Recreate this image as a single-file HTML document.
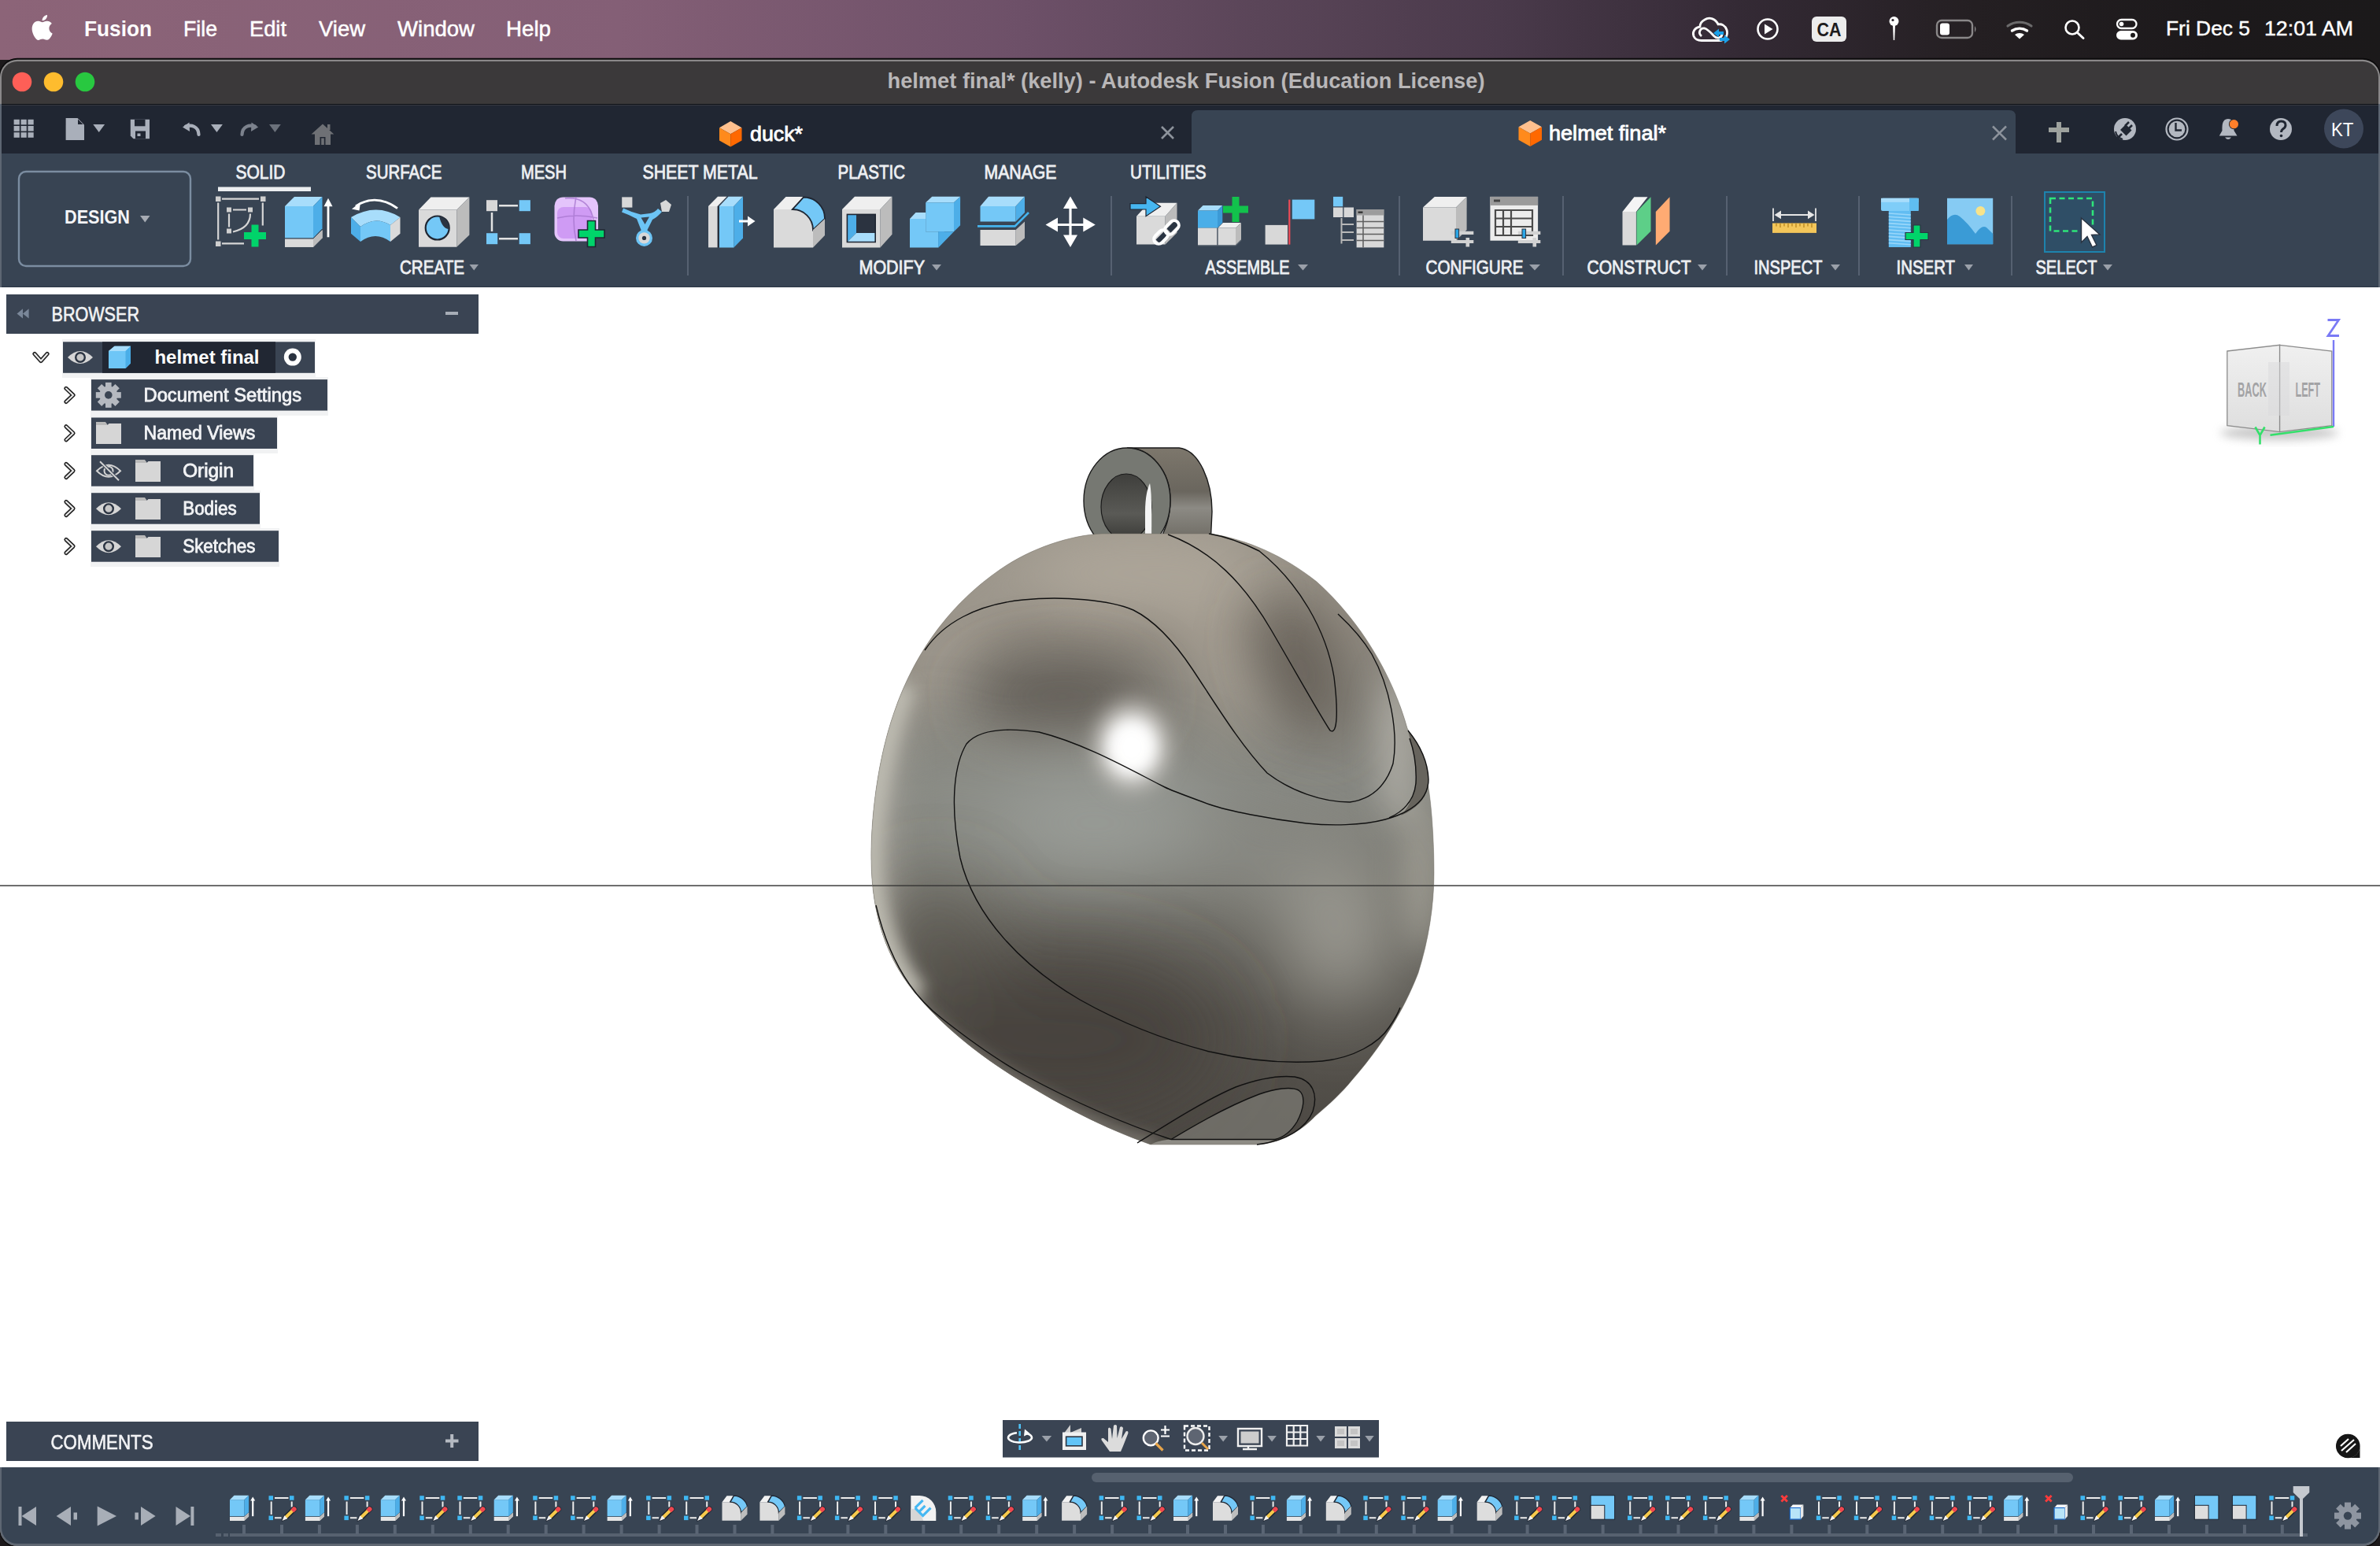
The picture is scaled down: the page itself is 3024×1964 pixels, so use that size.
<!DOCTYPE html>
<html><head><meta charset="utf-8">
<style>
*{margin:0;padding:0}
html,body{width:3024px;height:1964px;overflow:hidden;background:#1c191b}
svg{position:absolute;left:0;top:0;display:block}
text{font-family:"Liberation Sans",sans-serif}
</style></head><body>
<svg width="3024" height="1964" viewBox="0 0 3024 1964">
<defs>
<linearGradient id="gMenu" x1="0" y1="0" x2="1" y2="0">
<stop offset="0" stop-color="#8c6478"/>
<stop offset="0.26" stop-color="#845f76"/>
<stop offset="0.43" stop-color="#6d5068"/>
<stop offset="0.53" stop-color="#5a4558"/>
<stop offset="0.63" stop-color="#4a3a4b"/>
<stop offset="0.73" stop-color="#342a35"/>
<stop offset="0.83" stop-color="#241f22"/>
<stop offset="0.93" stop-color="#1c191b"/>
<stop offset="1" stop-color="#1b191a"/>
</linearGradient>
</defs>

<rect x="0" y="0" width="3024" height="76" fill="url(#gMenu)"/>
<g transform="translate(37.7 19) scale(1.33)" fill="#fff"><path d="M12.152 6.896c-.948 0-2.415-1.078-3.96-1.040-2.040.027-3.910 1.183-4.961 3.014-2.117 3.675-.546 9.103 1.519 12.090 1.013 1.454 2.208 3.090 3.792 3.039 1.520-.065 2.090-.987 3.935-.987 1.831 0 2.350.987 3.960.948 1.637-.026 2.676-1.480 3.676-2.948 1.156-1.688 1.636-3.325 1.662-3.415-.039-.013-3.182-1.221-3.220-4.857-.026-3.040 2.480-4.494 2.597-4.559-1.429-2.090-3.623-2.324-4.390-2.376-2-.156-3.675 1.090-4.610 1.090zM15.530 3.830c.843-1.012 1.400-2.427 1.245-3.830-1.207.052-2.662.805-3.532 1.818-.780.896-1.454 2.338-1.273 3.714 1.338.104 2.715-.688 3.559-1.701"/></g>
<text x="107" y="46" font-size="27" fill="#fff" font-weight="bold" textLength="86" lengthAdjust="spacingAndGlyphs">Fusion</text>
<text x="233" y="46" font-size="27" fill="#fff" textLength="43" lengthAdjust="spacingAndGlyphs" stroke="#fff" stroke-width="0.5">File</text>
<text x="317" y="46" font-size="27" fill="#fff" textLength="47" lengthAdjust="spacingAndGlyphs" stroke="#fff" stroke-width="0.5">Edit</text>
<text x="405" y="46" font-size="27" fill="#fff" textLength="59" lengthAdjust="spacingAndGlyphs" stroke="#fff" stroke-width="0.5">View</text>
<text x="505" y="46" font-size="27" fill="#fff" textLength="98" lengthAdjust="spacingAndGlyphs" stroke="#fff" stroke-width="0.5">Window</text>
<text x="643" y="46" font-size="27" fill="#fff" textLength="57" lengthAdjust="spacingAndGlyphs" stroke="#fff" stroke-width="0.5">Help</text>
<g fill="none" stroke="#fff" stroke-width="2.8" stroke-linejoin="round"><path d="M2162 51.5 H2184 C2192 51.5 2196 45 2194 38 C2192 32 2187 30 2183 31 C2180 24 2172 21 2166 25 C2162 27 2160 31 2160 34 C2153 35 2150 41 2152 46 C2153.5 49.5 2157 51.5 2162 51.5Z"/><path d="M2162 46 C2157 42 2160 35 2166 36 C2170 37 2174 42 2178 46 C2182 50 2188 48 2188 43"/></g>
<path d="M2177 42 l7 -5.5 v3.5 h6 v4 h-6 v3.5z M2198 50 l-7 5.5 v-3.5 h-6 v-4 h6 v-3.5z" fill="#1aa0e8"/>
<circle cx="2246" cy="37" r="12.5" fill="none" stroke="#fff" stroke-width="2.6"/><path d="M2242 30.5 L2252.5 37 L2242 43.5Z" fill="#fff"/>
<rect x="2302" y="21" width="44" height="32" rx="6" fill="#ececec"/>
<text x="2308.5" y="45.5" font-size="23" fill="#1d1b1c" font-weight="bold" textLength="31" lengthAdjust="spacingAndGlyphs">CA</text>
<circle cx="2406.5" cy="27" r="6" fill="#fff"/><circle cx="2405" cy="25.5" r="1.6" fill="#2a2229"/><path d="M2405 32 h3 L2407.2 51 h-1.4z" fill="#fff"/>
<rect x="2461" y="26" width="45" height="22" rx="6" fill="none" stroke="#8a8889" stroke-width="2.4"/><rect x="2465" y="29.5" width="12" height="15" rx="3" fill="#fff"/><path d="M2509 33 q3 4 0 8z" fill="#8a8889"/>
<g fill="none" stroke-linecap="round"><path d="M2551 33 A26 26 0 0 1 2581 33" stroke="#6b6a6b" stroke-width="3.2"/><path d="M2556.5 39 A17 17 0 0 1 2575.5 39" stroke="#fff" stroke-width="3.4"/></g><path d="M2560 44 A10 10 0 0 1 2572 44 L2566 49.5Z" fill="#fff"/>
<circle cx="2633" cy="35" r="8.5" fill="none" stroke="#fff" stroke-width="2.6"/><path d="M2639.5 41.5 L2647 48.5" stroke="#fff" stroke-width="3" stroke-linecap="round"/>
<rect x="2690" y="25" width="24.5" height="11" rx="5.5" fill="none" stroke="#fff" stroke-width="2.3"/><circle cx="2695.5" cy="30.5" r="2.8" fill="#fff"/><rect x="2689" y="39" width="27" height="11.5" rx="5.8" fill="#fff"/><circle cx="2710" cy="44.7" r="3" fill="#1c1a1b"/>
<text x="2752" y="44.5" font-size="25.5" fill="#fff" textLength="107" lengthAdjust="spacingAndGlyphs" stroke="#fff" stroke-width="0.4">Fri Dec 5</text>
<text x="2877" y="44.5" font-size="25.5" fill="#fff" textLength="113" lengthAdjust="spacingAndGlyphs" stroke="#fff" stroke-width="0.4">12:01 AM</text>
<rect x="-1" y="73.8" width="3026" height="1892" rx="23" ry="23" fill="#0c0b0c"/><rect x="0" y="75.8" width="3024" height="1888.2" rx="22" ry="22" fill="#8a8889"/><rect x="0" y="1600" width="3024" height="364" rx="22" fill="#5f6772"/>
<clipPath id="winclip"><rect x="2" y="78" width="3020" height="1883" rx="20" ry="20"/></clipPath>
<g clip-path="url(#winclip)">
<rect x="0" y="76" width="3024" height="57" fill="#3b393a"/>
<rect x="0" y="132" width="3024" height="1.5" fill="#0e1116"/>
<rect x="0" y="133.5" width="3024" height="62" fill="#202632"/>
<rect x="0" y="195" width="3024" height="170" fill="#384453"/>
<rect x="0" y="365" width="3024" height="1499" fill="#ffffff"/>
<rect x="0" y="363.8" width="3024" height="1.4" fill="#2f3948"/>
<rect x="0" y="1864" width="3024" height="100" fill="#384453"/>
</g>
<rect x="0" y="365" width="3024" height="1499" fill="#ffffff"/>
<rect x="0" y="132" width="2" height="233" fill="#5d6672"/>
<rect x="3022" y="132" width="2" height="233" fill="#5d6672"/>
<rect x="0" y="1864" width="2" height="80" fill="#5d6672"/>
<rect x="3022" y="1864" width="2" height="80" fill="#5d6672"/>
<circle cx="28" cy="104" r="12.3" fill="#fe5f57"/>
<circle cx="68" cy="104" r="12.3" fill="#febc2e"/>
<circle cx="108" cy="104" r="12.3" fill="#28c840"/>
<text x="1127.5" y="111.6" font-size="27" fill="#b9b7b8" font-weight="bold" textLength="759" lengthAdjust="spacingAndGlyphs">helmet final* (kelly) - Autodesk Fusion (Education License)</text>
<rect x="17.60" y="151.80" width="7.2" height="6.6" fill="#a9afba"/>
<rect x="17.60" y="160.00" width="7.2" height="6.6" fill="#a9afba"/>
<rect x="17.60" y="168.20" width="7.2" height="6.6" fill="#a9afba"/>
<rect x="26.55" y="151.80" width="7.2" height="6.6" fill="#a9afba"/>
<rect x="26.55" y="160.00" width="7.2" height="6.6" fill="#a9afba"/>
<rect x="26.55" y="168.20" width="7.2" height="6.6" fill="#a9afba"/>
<rect x="35.50" y="151.80" width="7.2" height="6.6" fill="#a9afba"/>
<rect x="35.50" y="160.00" width="7.2" height="6.6" fill="#a9afba"/>
<rect x="35.50" y="168.20" width="7.2" height="6.6" fill="#a9afba"/>
<path d="M83.6 150 H98.5 L107 158.5 V178 H83.6Z" fill="#a9afba"/><path d="M98.5 150 V158.5 H107" fill="#d5d9e0" opacity="0.0"/>
<path d="M99 151.5 L105.5 158 H99Z" fill="#202632"/>
<path d="M118.3 158H133.1L125.69999999999999 168Z" fill="#a9afba"/>
<path d="M165.8 151.8 H190 V176.2 H169.5 L165.8 172.5Z" fill="#a9afba"/>
<rect x="171" y="151.8" width="13.5" height="8.5" fill="#202632"/><rect x="172" y="166.5" width="13" height="9.7" fill="#202632"/><rect x="174.5" y="169.5" width="4" height="3.5" fill="#a9afba"/>
<path d="M252.5 171 C252 160 243 158.5 236 160.5" fill="none" stroke="#a9afba" stroke-width="4.2" stroke-linecap="round"/>
<path d="M232 161.5 L240.5 155.5 L241 167Z" fill="#a9afba"/>
<path d="M268 158H282.9L275.45 168Z" fill="#a9afba"/>
<path d="M307.5 171 C308 160 317 158.5 324 160.5" fill="none" stroke="#7c828d" stroke-width="4.2" stroke-linecap="round"/>
<path d="M328.2 161.5 L319.5 155.5 L319 167Z" fill="#7c828d"/>
<path d="M342 158H356.8L349.4 168Z" fill="#6b717b"/>
<path d="M395.6 170.5 L410 157.4 L424.3 170.5 H420 V184 H400 V170.5Z" fill="#6e7075"/><rect x="406.5" y="174" width="7" height="10" fill="#202632"/><rect x="408.2" y="175.5" width="3.6" height="8.5" fill="#6e7075"/><rect x="416" y="158" width="3.5" height="7" fill="#6e7075"/>
<path d="M1514 196 V148 Q1514 140 1522 140 H2553 Q2561 140 2561 148 V196Z" fill="#384453"/>
<path d="M928.25 154 L942.5 162.125 L928.25 170.25 L914 162.125Z" fill="#ffc08e"/><path d="M914 162.125 L928.25 170.25 L928.25 186.5 L914 178.375Z" fill="#ff8a1c"/><path d="M942.5 162.125 L928.25 170.25 L928.25 186.5 L942.5 178.375Z" fill="#ff6800"/>
<text x="953" y="178.7" font-size="25.5" fill="#ffffff" textLength="67" lengthAdjust="spacingAndGlyphs" stroke="#ffffff" stroke-width="0.8">duck*</text>
<path d="M1476 161 L1491 176 M1491 161 L1476 176" stroke="#8d939c" stroke-width="2.6"/>
<path d="M1944.25 153 L1959.0 161.25 L1944.25 169.5 L1929.5 161.25Z" fill="#ffc08e"/><path d="M1929.5 161.25 L1944.25 169.5 L1944.25 186 L1929.5 177.75Z" fill="#ff8a1c"/><path d="M1959.0 161.25 L1944.25 169.5 L1944.25 186 L1959.0 177.75Z" fill="#ff6800"/>
<text x="1968" y="178.2" font-size="25.5" fill="#ffffff" textLength="149" lengthAdjust="spacingAndGlyphs" stroke="#ffffff" stroke-width="0.8">helmet final*</text>
<path d="M2532 160.5 L2549 177.5 M2549 160.5 L2532 177.5" stroke="#8d939c" stroke-width="2.6"/>
<path d="M2603 165 H2629 M2616 155 V181" stroke="#9ea29e" stroke-width="6"/>
<circle cx="2700" cy="164" r="14" fill="#b3b8c1"/>
<path d="M2690.5 175.5 L2696 170" stroke="#202632" stroke-width="2.6"/><path d="M2694 165 L2701 158 L2708.5 165.5 L2701.5 172.5Z" fill="#202632"/><path d="M2700 160 L2705 155 M2704 164 L2709 159" stroke="#202632" stroke-width="2.6"/>
<path d="M2688 167 A13 13 0 0 0 2697 177" stroke="#202632" stroke-width="2" fill="none"/>
<circle cx="2766" cy="164" r="13.5" fill="none" stroke="#b3b8c1" stroke-width="2.2"/><circle cx="2766" cy="164" r="10.3" fill="#b3b8c1"/><path d="M2764.5 156 V165.5 H2772" fill="none" stroke="#202632" stroke-width="2.4"/>
<path d="M2831 151 C2823 151 2823.5 160 2823.5 166 L2819.8 172.5 H2842.5 L2838.5 166 C2838.5 160 2839 151 2831 151Z" fill="#b3b8c1"/><path d="M2827 174.5 Q2831 179.5 2835 174.5Z" fill="#b3b8c1"/>
<circle cx="2838.4" cy="157.7" r="6.5" fill="#202632"/><circle cx="2838.4" cy="157.7" r="5.6" fill="#ff7f2a"/>
<circle cx="2898" cy="164" r="14" fill="#b3b8c1"/>
<path d="M2893 160 Q2893 154 2898.5 154 Q2904 154 2904 159 Q2904 162 2900.5 164 Q2898.5 165.5 2898.5 168" fill="none" stroke="#202632" stroke-width="3"/><circle cx="2898.5" cy="172.5" r="1.8" fill="#202632"/>
<circle cx="2978" cy="163.5" r="25" fill="#3d475a"/>
<text x="2962" y="172.5" font-size="24.5" fill="#ffffff" textLength="28.5" lengthAdjust="spacingAndGlyphs">KT</text>
<rect x="24" y="218" width="218" height="120" rx="9" fill="none" stroke="#7b8da1" stroke-width="2.4"/>
<text x="82" y="284" font-size="24.5" fill="#f4f5f7" font-weight="bold" textLength="83" lengthAdjust="spacingAndGlyphs">DESIGN</text>
<path d="M178 274H190.5L184.25 282.5Z" fill="#a6abb3"/>
<text x="299.5" y="226.6" font-size="24" fill="#eef0f3" textLength="63" lengthAdjust="spacingAndGlyphs" stroke="#eef0f3" stroke-width="0.8">SOLID</text>
<text x="465" y="226.6" font-size="24" fill="#eef0f3" textLength="96.5" lengthAdjust="spacingAndGlyphs" stroke="#eef0f3" stroke-width="0.8">SURFACE</text>
<text x="662" y="226.6" font-size="24" fill="#eef0f3" textLength="58" lengthAdjust="spacingAndGlyphs" stroke="#eef0f3" stroke-width="0.8">MESH</text>
<text x="816.5" y="226.6" font-size="24" fill="#eef0f3" textLength="146" lengthAdjust="spacingAndGlyphs" stroke="#eef0f3" stroke-width="0.8">SHEET METAL</text>
<text x="1064.5" y="226.6" font-size="24" fill="#eef0f3" textLength="85.5" lengthAdjust="spacingAndGlyphs" stroke="#eef0f3" stroke-width="0.8">PLASTIC</text>
<text x="1250.5" y="226.6" font-size="24" fill="#eef0f3" textLength="92" lengthAdjust="spacingAndGlyphs" stroke="#eef0f3" stroke-width="0.8">MANAGE</text>
<text x="1436" y="226.6" font-size="24" fill="#eef0f3" textLength="96.5" lengthAdjust="spacingAndGlyphs" stroke="#eef0f3" stroke-width="0.8">UTILITIES</text>
<rect x="277" y="237.5" width="118" height="5.5" fill="#eceef0"/>
<text x="508" y="347.5" font-size="24" fill="#eef0f3" textLength="82" lengthAdjust="spacingAndGlyphs" stroke="#eef0f3" stroke-width="0.8">CREATE</text>
<path d="M596.5 336H608L602.25 343.5Z" fill="#9aa0a9"/>
<text x="1091.5" y="347.5" font-size="24" fill="#eef0f3" textLength="83.5" lengthAdjust="spacingAndGlyphs" stroke="#eef0f3" stroke-width="0.8">MODIFY</text>
<path d="M1184 336H1196L1190.0 343.5Z" fill="#9aa0a9"/>
<text x="1531.5" y="347.5" font-size="24" fill="#eef0f3" textLength="107" lengthAdjust="spacingAndGlyphs" stroke="#eef0f3" stroke-width="0.8">ASSEMBLE</text>
<path d="M1649 336H1662L1655.5 343.5Z" fill="#9aa0a9"/>
<text x="1811.5" y="347.5" font-size="24" fill="#eef0f3" textLength="124" lengthAdjust="spacingAndGlyphs" stroke="#eef0f3" stroke-width="0.8">CONFIGURE</text>
<path d="M1943 336H1957L1950.0 343.5Z" fill="#9aa0a9"/>
<text x="2016.5" y="347.5" font-size="24" fill="#eef0f3" textLength="132" lengthAdjust="spacingAndGlyphs" stroke="#eef0f3" stroke-width="0.8">CONSTRUCT</text>
<path d="M2157 336H2169L2163.0 343.5Z" fill="#9aa0a9"/>
<text x="2228.5" y="347.5" font-size="24" fill="#eef0f3" textLength="87" lengthAdjust="spacingAndGlyphs" stroke="#eef0f3" stroke-width="0.8">INSPECT</text>
<path d="M2326 336H2338L2332.0 343.5Z" fill="#9aa0a9"/>
<text x="2409.5" y="347.5" font-size="24" fill="#eef0f3" textLength="74.5" lengthAdjust="spacingAndGlyphs" stroke="#eef0f3" stroke-width="0.8">INSERT</text>
<path d="M2496 336H2507L2501.5 343.5Z" fill="#9aa0a9"/>
<text x="2586.5" y="347.5" font-size="24" fill="#eef0f3" textLength="78" lengthAdjust="spacingAndGlyphs" stroke="#eef0f3" stroke-width="0.8">SELECT</text>
<path d="M2672 336H2684L2678.0 343.5Z" fill="#9aa0a9"/>
<rect x="873" y="249" width="2" height="101" fill="#566171"/>
<rect x="1411" y="249" width="2" height="101" fill="#566171"/>
<rect x="1777" y="249" width="2" height="101" fill="#566171"/>
<rect x="1985" y="249" width="2" height="101" fill="#566171"/>
<rect x="2193" y="249" width="2" height="101" fill="#566171"/>
<rect x="2361" y="249" width="2" height="101" fill="#566171"/>
<rect x="2555" y="249" width="2" height="101" fill="#566171"/>
<g transform="translate(274 249.5)"><rect x="0" y="0" width="6.5" height="6.5" fill="#cfcfcf"/><rect x="57" y="0" width="6.5" height="6.5" fill="#cfcfcf"/><rect x="0" y="57" width="6.5" height="6.5" fill="#cfcfcf"/><rect x="14" y="14" width="6" height="6" fill="#cfcfcf"/><rect x="41" y="14" width="6" height="6" fill="#cfcfcf"/><rect x="14" y="41" width="6" height="6" fill="#cfcfcf"/><path d="M8 3.2 H55 M3.2 8 V55 M8 59.8 H36 M59.8 8 V37 M22 17 H39 M17 22 V39" stroke="#d6d6d6" stroke-width="2.2"/><path d="M44 22 Q44 40 22 45" fill="none" stroke="#d6d6d6" stroke-width="2.2"/><path d="M45.5 36 h9 v9.5 h9.5 v9 h-9.5 v9.5 h-9 v-9.5 h-9.5 v-9 h9.5z" fill="#00d46a"/></g>
<g transform="translate(362 249.3)"><path d="M0 12.6 L12 0.6 H47.5 L36 12.6Z" fill="#a8ddfb" /><path d="M0 12.6 H36 V53 H0Z" fill="#74c8f7" /><path d="M36 12.6 L47.5 0.6 V41 L36 53Z" fill="#4daee8" /><path d="M0 54.5 H36 L47.5 43 V53 L36 64.5 H0Z" fill="#efefef" /><path d="M0 54.5 H36 V64.5 H0Z" fill="#dadada" /><path d="M36 54.5 L47.5 43 V53 L36 64.5Z" fill="#bcbcbc" /><path d="M55 12 V52" stroke="#fff" stroke-width="2.8"/><path d="M49.5 13 L55 2.5 L60.5 13Z" fill="#fff"/></g>
<g transform="translate(446 249)"><path d="M59 15.6 Q31 -4 6 13" fill="none" stroke="#fff" stroke-width="2.8"/><path d="M1 16.5 L12 8 L10.5 18.5Z" fill="#fff"/><path d="M0 27 Q32 8 62.5 27 L50 37 Q31 25 12 39Z" fill="#a8ddfb" /><path d="M12 39 Q31 25 50 37 V58 Q31 44 12 58Z" fill="#74c8f7" /><path d="M0 27 L12 39 V58 L0 47.7Z" fill="#4daee8" /><path d="M50 37 L62.5 27 V47.7 L50 58Z" fill="#dadada" /></g>
<g transform="translate(532 249)"><path d="M0 17.5 L15.5 1.4 H64.4 L48.3 17.5Z" fill="#efefef" /><path d="M0 17.5 H48.3 V64.7 H0Z" fill="#dadada" /><path d="M48.3 17.5 L64.4 1.4 V49.6 L48.3 64.7Z" fill="#bcbcbc" /><circle cx="23.7" cy="40.5" r="15" fill="#74c8f7" stroke="#1f2632" stroke-width="2.2"/><path d="M26 25.7 A15 15 0 0 1 38.6 42 Q30 42 26 25.7Z" fill="#2a3442"/></g>
<g transform="translate(617 249)"><rect x="1" y="5.2" width="14" height="14" fill="#d8d8d8"/><rect x="42.7" y="5.2" width="14.2" height="14" fill="#74c8f7"/><rect x="1" y="47.2" width="14.2" height="14" fill="#74c8f7"/><rect x="42.7" y="47.2" width="14.2" height="14" fill="#74c8f7"/><path d="M17 12.2 H41 M17 54.2 H41 M8 21 V45" stroke="#e2e2e2" stroke-width="2.5"/></g>
<g transform="translate(704 249)"><rect x="0.5" y="1.4" width="55.5" height="56" rx="11" fill="#e4c4fb"/><rect x="4" y="14" width="44" height="40" rx="8" fill="#cf9bf4"/><path d="M4 28 Q28 22 55 28 M28 1.5 Q22 30 28 57 M14 3 Q44 0 50 30" fill="none" stroke="#a877cf" stroke-width="1.6" opacity="0.8"/><path d="M42.5 31.5 h10 v11.5 h11.5 v10 h-11.5 v11.5 h-10 v-11.5 h-11.5 v-10 h11.5z" fill="#00d46a" stroke="#1f2632" stroke-width="1.6"/></g>
<g transform="translate(789 249)"><rect x="1.2" y="1.4" width="13.2" height="13.2" fill="#d8d8d8"/><path fill-rule="evenodd" d="M3 15.5 Q14 21 25 23.5 L37 22 Q43 21 47 16 L52 20 Q46 27 40 30 L33.5 43 V47 H25.5 V43 L20 29 Q11 24 1 20.5Z M25.5 27.5 L36 26.5 L30.5 36Z" fill="#6cc4f5"/><circle cx="29.5" cy="53.4" r="10.5" fill="#6cc4f5"/><circle cx="29.5" cy="53.4" r="7.2" fill="#d8d8d8"/><circle cx="29.5" cy="53.4" r="2.6" fill="#2a3442"/><path d="M50 9 L57 5 L64 11 L61 20 L52 20Z" fill="#d8d8d8"/></g>
<g transform="translate(900 249)"><path d="M0 13 L12 0.7 H23.5 L11.6 13Z" fill="#efefef" /><path d="M0 13 H11.6 V65.4 H0Z" fill="#dadada" /><path d="M13.9 13 L25.5 0.7 H44 L32.4 13Z" fill="#a8ddfb" /><path d="M13.9 13 H32.4 V65.4 H13.9Z" fill="#74c8f7" /><path d="M32.4 13 L44 0.7 V53.4 L32.4 65.4Z" fill="#4daee8" /><path d="M39 32 H52" stroke="#fff" stroke-width="3"/><path d="M50 25.5 L59.5 32 L50 38.5Z" fill="#fff"/><path d="M12.7 13 V65.4" stroke="#1f2632" stroke-width="1.6"/></g>
<g transform="translate(983 249)"><path d="M0 17 L15.5 1 H38 L22.5 17Z" fill="#efefef" /><path d="M0 17 H24 A26 26 0 0 1 50 43 V65.4 H0Z" fill="#dadada" /><path d="M24 17 L38 1.5 A27 27 0 0 1 65 29 L50 43 A26 26 0 0 0 24 17Z" fill="#74c8f7" stroke="#1f2632" stroke-width="1.8"/><path d="M50 43 L65 29 V50 L50 65.4Z" fill="#bcbcbc" /></g>
<g transform="translate(1070 249)"><path d="M0 17 L16 0.7 H63.5 L48.4 17Z" fill="#efefef" /><path d="M0 17 H48.4 V65.4 H0Z" fill="#dadada" /><path d="M48.4 17 L63.5 0.7 V48.8 L48.4 65.4Z" fill="#bcbcbc" /><rect x="6.4" y="23.4" width="35.8" height="35.1" fill="#2b3340" stroke="#1f2632" stroke-width="1.6"/><path d="M7.2 24.2 H18 V47 L7.2 57.7Z" fill="#4daee8" /><path d="M7.2 57.7 L18 47 H41.4 V57.7Z" fill="#a8ddfb" /></g>
<g transform="translate(1156 249)"><path d="M20.2 8.3 L28.3 0.7 H64.1 L56 8.3Z" fill="#a8ddfb" /><path d="M20.2 8.3 H56 V45.3 H20.2Z" fill="#74c8f7" /><path d="M56 8.3 L64.1 0.7 V37.2 L56 45.3Z" fill="#4daee8" /><path d="M0 29.1 L7.5 21 H20.2 V29.1Z" fill="#a8ddfb" /><path d="M0 29.1 H20.2 V45.3 H36.4 V65.4 H0Z" fill="#74c8f7" /><path d="M36.4 45.3 H56 L36.4 65.4Z" fill="#4daee8" /><path d="M36.4 45.3 L44 45.3 L36.4 65.4Z" fill="#4daee8" /></g>
<g transform="translate(1242 249)"><path d="M3.5 13 L14 0.7 H60 L48.6 13Z" fill="#a8ddfb" /><path d="M3.5 13 H48.6 V32.6 H3.5Z" fill="#74c8f7" /><path d="M48.6 13 L60 0.7 V21 L48.6 32.6Z" fill="#4daee8" /><path d="M0 38.4 H47.5 L65 21" fill="none" stroke="#45b4ee" stroke-width="2.6"/><path d="M3.5 43 H48.6 V63 H3.5Z" fill="#dadada" /><path d="M48.6 43 L60 32.6 V53.4 L48.6 63Z" fill="#bcbcbc" /></g>
<g transform="translate(1328 249)"><path d="M32 14 V58 M10 36.5 H54" stroke="#fff" stroke-width="3.2"/><path d="M32 0.5 L41 16 H23Z M32 65 L41 49.5 H23Z M0.5 36.5 L16 27.5 V45.5Z M63.8 36.5 L48.3 27.5 V45.5Z" fill="#fff"/></g>
<g transform="translate(1435 249)"><path d="M9 25.7 L24.6 8.8 H60.5 L45.6 25.7Z" fill="#efefef" /><path d="M9 25.7 H45.6 V61.6 H9Z" fill="#dadada" /><path d="M45.6 25.7 L60.5 8.8 V46.8 L45.6 61.6Z" fill="#bcbcbc" /><path d="M1 9.6 H21 V0.9 L39.5 13.3 L21 25.7 V17 H1Z" fill="#46b6f0" stroke="#1f2632" stroke-width="1.2"/><g fill="none" stroke-width="7" stroke="#2a3442"><path d="M36 58 L48 46"/><path d="M50 44 L62 32"/></g><g fill="none" stroke="#fff" stroke-width="4"><rect x="30" y="46" width="20" height="12" rx="6" transform="rotate(-45 40 52)"/><rect x="44" y="34" width="20" height="12" rx="6" transform="rotate(-45 54 40)"/></g></g>
<g transform="translate(1521 249)"><path d="M1 18.5 L7.5 12 H32.3 L26 18.5Z" fill="#a8ddfb" /><path d="M1 18.5 H26 V40.6 H1Z" fill="#4aaee8" /><path d="M26 18.5 L32.3 12 V34 L26 40.6Z" fill="#3c9ad6" /><path d="M1 40.6 H25.3 V62.9 H1Z" fill="#dadada" /><path d="M26.6 40.6 L33 34 H56 L49 40.6Z" fill="#efefef" /><path d="M26.6 40.6 H49 V62.9 H26.6Z" fill="#dadada" /><path d="M49 40.6 L56 34 V56 L49 62.9Z" fill="#bcbcbc" /><path d="M1 62.9 H49 L56 56" fill="none" stroke="#56606c" stroke-width="1.4"/><path d="M44.5 0.9 h9 v11.5 h11.5 v9 h-11.5 v11.5 h-9 v-11.5 h-11.5 v-9 h11.5z" fill="#12c24c"/></g>
<g transform="translate(1607 249)"><rect x="0.6" y="36.9" width="28.4" height="24.7" fill="#d8d8d8"/><rect x="30.2" y="4.6" width="2.2" height="57" fill="#ee4b57"/><rect x="34.8" y="4.6" width="28.5" height="24.8" fill="#74c8f7"/></g>
<g transform="translate(1694 249)"><rect x="0" y="0.9" width="12.2" height="12.4" fill="#74c8f7"/><rect x="0" y="14.5" width="12.2" height="12.5" fill="#d8d8d8"/><rect x="13.5" y="14.5" width="12.5" height="12.5" fill="#d8d8d8"/><path d="M10.5 28 V60.4 M10.5 36 H26 M10.5 46 H26 M10.5 56 H26" stroke="#b8b8b8" stroke-width="2"/><rect x="29.6" y="17" width="34.7" height="48.4" fill="#d9d9d9"/><rect x="29.6" y="17" width="34.7" height="7.5" fill="#9c9c9c"/><path d="M29.6 32.5 H64.3 M29.6 40.5 H64.3 M29.6 48.5 H64.3 M29.6 56.5 H64.3 M38 24.5 V65.4" stroke="#5e5e5e" stroke-width="1.5"/><rect x="31.5" y="19.5" width="6" height="2.4" fill="#333"/></g>
<g transform="translate(1808 249)"><path d="M0 14.5 L14.8 0.9 H55.6 L42 14.5Z" fill="#efefef" /><path d="M0 14.5 H42 V56.7 H0Z" fill="#dadada" /><path d="M42 14.5 L55.6 0.9 V43 L42 56.7Z" fill="#bcbcbc" /><path d="M35.8 46.8 H64.3 M35.8 58 H64.3" stroke="#d2d2d2" stroke-width="4.2"/><rect x="41" y="42" width="4.6" height="11.5" fill="#2ba6e6" stroke="#2a3442" stroke-width="1"/><rect x="54.5" y="53" width="4.6" height="11.5" fill="#d2d2d2"/></g>
<g transform="translate(1893 249)"><rect x="0.4" y="0.9" width="60.7" height="55.8" fill="#ececec"/><rect x="0.4" y="0.9" width="60.7" height="11" fill="#9b9b9b"/><rect x="5" y="4.5" width="8" height="3" fill="#444"/><path d="M7 18 H54 V50 H7Z M7 28.5 H54 M7 39 H54 M17 18 V50 M27 18 V50" fill="none" stroke="#4a4a4a" stroke-width="2.2"/><path d="M35.8 46.8 H64.3 M35.8 58 H64.3" stroke="#d2d2d2" stroke-width="4.2"/><rect x="41" y="42" width="4.6" height="11.5" fill="#2ba6e6" stroke="#2a3442" stroke-width="1"/><rect x="54.5" y="53" width="4.6" height="11.5" fill="#d2d2d2"/></g>
<g transform="translate(2061 249)"><path d="M0.5 19.9 L15.4 1.2 H32.5 L17.9 19.9Z" fill="#f4f4f4" /><path d="M0.5 19.9 H17.9 V62.5 H0.5Z" fill="#dadada" /><path d="M18.5 19.9 L36.5 1.2 V44.7 L18.5 62.5Z" fill="#5dcf88" /><path d="M42.8 19.9 L60.5 1.2 V44.7 L42.8 62.5Z" fill="#ffab73" /></g>
<g transform="translate(2252 264)"><path d="M1 0.5 V17 M55 0.5 V17" stroke="#e6e6e6" stroke-width="1.8"/><path d="M4 8.9 H52" stroke="#e6e6e6" stroke-width="2"/><path d="M2.5 8.9 L11 3.5 V14.3Z M53.5 8.9 L45 3.5 V14.3Z" fill="#e6e6e6"/><rect x="0" y="19.5" width="56" height="12.4" fill="#f3c65a"/><path d="M5 19.5 V23.5 M10 19.5 V25 M15 19.5 V23.5 M20 19.5 V25 M25 19.5 V23.5 M30 19.5 V25 M35 19.5 V23.5 M40 19.5 V25 M45 19.5 V23.5 M50 19.5 V25" stroke="#b8861e" stroke-width="1.3"/></g>
<g transform="translate(2390 249)"><rect x="0" y="2.8" width="47.7" height="16.2" rx="2" fill="#7fcdf8"/><rect x="0" y="2.8" width="47.7" height="5" fill="#a8ddfb"/><rect x="36" y="2.8" width="11.7" height="16.2" fill="#5fbdf1"/><rect x="9.8" y="19" width="28" height="46" fill="#62bdf2"/><path d="M9.8 22.0 L37.8 24.0 M9.8 26.2 L37.8 28.2 M9.8 30.4 L37.8 32.4 M9.8 34.6 L37.8 36.6 M9.8 38.8 L37.8 40.8 M9.8 43.0 L37.8 45.0 M9.8 47.2 L37.8 49.2 M9.8 51.400000000000006 L37.8 53.400000000000006 M9.8 55.6 L37.8 57.6 M9.8 59.800000000000004 L37.8 61.800000000000004 " stroke="#9ad7fa" stroke-width="1.6"/><path d="M41 37 h9 v9.5 h10 v9 h-10 v9.5 h-9 v-9.5 h-10 v-9 h10z" fill="#00d46a" stroke="#2a3442" stroke-width="1.2"/></g>
<g transform="translate(2474 249)"><rect x="0" y="2.8" width="58.2" height="58.4" fill="#86cbf3"/><path d="M0 30 Q8 20 16 26 Q26 34 36 48 Q44 36 50 40 L58.2 48 V61.2 H0Z" fill="#3a9bd6"/><circle cx="42.4" cy="19" r="6" fill="#f7e38a"/></g>
<rect x="2598" y="244" width="76" height="76" fill="#2f4e66" stroke="#1d83ad" stroke-width="2"/>
<rect x="2605" y="252" width="54" height="41.5" fill="none" stroke="#2ee57a" stroke-width="2.6" stroke-dasharray="7 4.5"/>
<path d="M2644.5 277 V308 L2652 300.5 L2658.5 314 L2664 311.5 L2657.5 298.5 L2668 298Z" fill="#fff" stroke="#2a3442" stroke-width="1.4"/>
<rect x="0" y="1124.4" width="3024" height="1.4" fill="#303030"/>
<defs><filter id="fblur8" x="-50%" y="-50%" width="200%" height="200%"><feGaussianBlur stdDeviation="6"/></filter><linearGradient id="gcube" x1="0" y1="0" x2="0" y2="1"><stop offset="0" stop-color="#f0f0f0"/><stop offset="1" stop-color="#dedede"/></linearGradient></defs>
<ellipse cx="2896" cy="550" rx="75" ry="9" fill="#9a9a9a" opacity="0.55" filter="url(#fblur8)"/>
<path d="M2829.8 446 L2896.6 438.3 V548.6 L2829.8 540.7Z" fill="url(#gcube)" stroke="#8c8c8c" stroke-width="1.3"/>
<path d="M2896.6 438.3 L2962.8 446 V540.7 L2896.6 548.6Z" fill="url(#gcube)" stroke="#8c8c8c" stroke-width="1.3"/>
<rect x="2882" y="460" width="27" height="68" fill="#d9dadc" opacity="0.5"/>
<text x="2843" y="503.8" font-size="26" fill="#a3a3a5" font-weight="bold" textLength="37" lengthAdjust="spacingAndGlyphs" transform="translate(0 0)">BACK</text>
<text x="2916.5" y="503.5" font-size="26" fill="#a3a3a5" font-weight="bold" textLength="31.5" lengthAdjust="spacingAndGlyphs">LEFT</text>
<path d="M2965 432 V542" stroke="#7a7af5" stroke-width="2.4"/>
<path d="M2957.5 406.5 H2971.5 L2958 426.5 H2972" fill="none" stroke="#7a7af5" stroke-width="2.8"/>
<path d="M2965 542 L2884.5 552.8" stroke="#33e06a" stroke-width="2.4"/>
<path d="M2865.5 542.5 L2871.5 553 L2877.5 542.5 M2871.5 553 V564.5" fill="none" stroke="#33e06a" stroke-width="2.6"/>
<defs>
<clipPath id="hclip"><path d="M1400 678 C1360 680 1310 696 1270 724 C1215 762 1165 820 1136 905 C1115 965 1106 1040 1107 1095 C1108 1160 1125 1220 1170 1270 C1205 1310 1250 1345 1300 1375 C1350 1405 1400 1432 1462 1454 H1597 C1625 1453 1652 1438 1671 1418 C1690 1402 1705 1388 1718 1372 C1752 1333 1782 1288 1802 1236 C1815 1195 1822 1150 1822 1110 C1822 1060 1818 1010 1812 985 C1806 958 1795 940 1788 925 C1770 860 1730 790 1673 739 C1630 705 1585 686 1539 678 Z"/></clipPath>
<filter id="hb6" x="-100%" y="-100%" width="300%" height="300%"><feGaussianBlur stdDeviation="6"/></filter>
<filter id="hb10" x="-100%" y="-100%" width="300%" height="300%"><feGaussianBlur stdDeviation="10"/></filter>
<filter id="hb20" x="-100%" y="-100%" width="300%" height="300%"><feGaussianBlur stdDeviation="20"/></filter>
<filter id="hb35" x="-100%" y="-100%" width="300%" height="300%"><feGaussianBlur stdDeviation="35"/></filter>
<filter id="hb50" x="-100%" y="-100%" width="300%" height="300%"><feGaussianBlur stdDeviation="50"/></filter>
<filter id="hb70" x="-100%" y="-100%" width="300%" height="300%"><feGaussianBlur stdDeviation="70"/></filter>
<linearGradient id="hvert" x1="0" y1="0" x2="0" y2="1"><stop offset="0" stop-color="#9d978c"/><stop offset="0.18" stop-color="#8f897f"/><stop offset="0.42" stop-color="#878882"/><stop offset="0.58" stop-color="#77766f"/><stop offset="0.78" stop-color="#5a5751"/><stop offset="1" stop-color="#4a4641"/></linearGradient>
<radialGradient id="hspec" cx="0.5" cy="0.5" r="0.5"><stop offset="0" stop-color="#ffffff"/><stop offset="0.3" stop-color="#ffffff"/><stop offset="0.6" stop-color="#d8d6d2" stop-opacity="0.8"/><stop offset="1" stop-color="#a09c96" stop-opacity="0"/></radialGradient>
<linearGradient id="hloopside" x1="0" y1="0" x2="0" y2="1"><stop offset="0" stop-color="#7d776c"/><stop offset="0.45" stop-color="#6a665e"/><stop offset="0.62" stop-color="#8c8a84"/><stop offset="1" stop-color="#6a675f"/></linearGradient>
<linearGradient id="hhole" x1="0" y1="0" x2="0" y2="1"><stop offset="0" stop-color="#3f3f3c"/><stop offset="0.6" stop-color="#5a5a56"/><stop offset="1" stop-color="#3a3a37"/></linearGradient>
</defs>
<path d="M1432 569 H1498 C1524 572 1540 612 1540 650 L1538 692 H1470 C1484 670 1487 650 1487 635 C1487 598 1462 569 1432 569Z" fill="url(#hloopside)" stroke="#1a1a1a" stroke-width="1.4"/>
<ellipse cx="1432" cy="636" rx="55" ry="67" fill="#767872" stroke="#1a1a1a" stroke-width="1.4"/>
<ellipse cx="1431" cy="644" rx="32" ry="42" fill="url(#hhole)" stroke="#1a1a1a" stroke-width="1.2"/>
<path d="M1455 692 V650 C1455 632 1458 620 1461 614 C1463 625 1463.5 640 1463 692Z" fill="#f4f4f4"/>
<g clip-path="url(#hclip)">
<rect x="1090" y="660" width="750" height="810" fill="url(#hvert)"/>
<g filter="url(#hb35)">
<ellipse cx="1450" cy="728" rx="170" ry="55" fill="#ada69a"/>
<ellipse cx="1548" cy="830" rx="28" ry="115" fill="#aaa396" transform="rotate(-30 1548 830)"/>
<ellipse cx="1195" cy="830" rx="26" ry="110" fill="#a8a297" transform="rotate(33 1195 830)"/><ellipse cx="1290" cy="735" rx="20" ry="60" fill="#a8a297" transform="rotate(60 1290 735)"/>
</g>
<g filter="url(#hb35)">
<ellipse cx="1350" cy="885" rx="115" ry="50" fill="#625d56"/>
<ellipse cx="1655" cy="850" rx="45" ry="95" fill="#655f57" transform="rotate(-22 1655 850)"/>
</g>
<g filter="url(#hb20)">
<ellipse cx="1125" cy="1060" rx="20" ry="190" fill="#aaa69e"/>
<ellipse cx="1775" cy="950" rx="22" ry="95" fill="#aeaca4"/>
<ellipse cx="1805" cy="1110" rx="20" ry="100" fill="#9f9c93"/>
</g>
<g filter="url(#hb50)">
<ellipse cx="1390" cy="1045" rx="150" ry="75" fill="#9a9d98"/><ellipse cx="1185" cy="1060" rx="45" ry="120" fill="#8b8d86"/>
<ellipse cx="1700" cy="1185" rx="55" ry="90" fill="#a6a49c"/>
<ellipse cx="1600" cy="1090" rx="90" ry="35" fill="#8e8f89"/>
</g>
<g filter="url(#hb50)">
<ellipse cx="1350" cy="1320" rx="210" ry="110" fill="#46423d"/>
<ellipse cx="1190" cy="1200" rx="60" ry="80" fill="#5a5650"/>
</g>
<path d="M1108 1140 C1118 1225 1160 1280 1205 1318 C1250 1352 1310 1390 1380 1425 C1420 1442 1445 1452 1470 1456" fill="none" stroke="#8d8981" stroke-width="14" filter="url(#hb10)"/>
<path d="M1150 870 C1125 930 1106 1020 1107 1095 C1108 1160 1125 1215 1165 1265" fill="none" stroke="#bdbbb1" stroke-width="30" filter="url(#hb10)"/>
<g filter="url(#hb10)"><ellipse cx="1438" cy="948" rx="62" ry="72" fill="url(#hspec)"/></g>
<ellipse cx="1438" cy="950" rx="26" ry="30" fill="#ffffff" filter="url(#hb10)"/>
</g>
<path d="M1488 1447.5 C1520 1428 1560 1405 1600 1390 C1620 1383 1640 1380 1650 1385 C1660 1392 1656 1410 1648 1425 C1640 1438 1630 1445 1620 1447.5Z" fill="#7a7872" opacity="0.75"/>
<path d="M1462 1454 C1470 1450 1478 1448 1488 1447.5 H1620 C1610 1452 1600 1454 1597 1454Z" fill="#8e8c85"/>
<path d="M1400 678 C1360 680 1310 696 1270 724 C1215 762 1165 820 1136 905 C1115 965 1106 1040 1107 1095 C1108 1160 1125 1220 1170 1270 C1205 1310 1250 1345 1300 1375 C1350 1405 1400 1432 1462 1454 H1597 C1625 1453 1652 1438 1671 1418 C1690 1402 1705 1388 1718 1372 C1752 1333 1782 1288 1802 1236 C1815 1195 1822 1150 1822 1110 C1822 1060 1818 1010 1812 985 C1806 958 1795 940 1788 925 C1770 860 1730 790 1673 739 C1630 705 1585 686 1539 678 Z" fill="none" stroke="#6f6a62" stroke-width="1" stroke-opacity="0.45"/>
<path d="M1789 928 C1803 945 1814 965 1815 990 C1815 1010 1805 1025 1780 1036 C1795 1020 1800 1000 1799 980 C1798 960 1793 945 1789 928Z" fill="#67645d"/>
<path d="M1175 826 C1198 792 1240 768 1300 762 C1350 757 1410 762 1440 775 C1470 790 1495 820 1515 850 C1545 895 1575 945 1610 982 C1640 1005 1680 1019 1715 1019 C1745 1015 1762 995 1770 970 C1777 930 1766 872 1743 831 C1730 809 1714 793 1700 780" fill="none" stroke="#111111" stroke-width="1.4"/>
<path d="M1484 679 C1540 700 1580 740 1615 800 C1650 860 1675 905 1690 928 C1700 935 1700 900 1695 860 C1685 800 1650 740 1600 700 C1580 690 1560 682 1536 678" fill="none" stroke="#111111" stroke-width="1.4"/>
<path d="M1789 928 C1803 945 1814 965 1815 990 C1815 1012 1800 1030 1760 1041 C1730 1049 1690 1049 1660 1046 C1610 1040 1560 1030 1537 1022 C1510 1012 1490 1005 1480 1000 C1440 980 1380 945 1320 930 C1285 925 1245 925 1228 945 C1210 975 1208 1030 1220 1090 C1238 1165 1300 1228 1372 1270 C1420 1297 1475 1320 1537 1336 C1580 1346 1630 1352 1680 1348 C1720 1344 1752 1325 1765 1305 C1772 1295 1776 1288 1779 1280" fill="none" stroke="#111111" stroke-width="1.4"/>
<path d="M1113 1150 C1130 1222 1160 1266 1197 1294 C1230 1320 1264 1345 1302 1366 C1352 1393 1420 1425 1488 1447.5" fill="none" stroke="#111111" stroke-width="1.4"/>
<path d="M1445 1452 C1480 1430 1530 1398 1570 1381 C1600 1370 1625 1366 1645 1368 C1668 1372 1675 1390 1668 1412 C1660 1432 1635 1450 1597 1454" fill="none" stroke="#111111" stroke-width="1.4"/>
<path d="M1488 1447.5 C1520 1428 1560 1405 1600 1390 C1620 1383 1640 1380 1650 1385 C1660 1392 1656 1410 1648 1425 C1640 1438 1630 1445 1620 1447.5" fill="none" stroke="#111111" stroke-width="1.4"/>
<path d="M1488 1447.5 H1620" fill="none" stroke="#111111" stroke-width="1.4"/>
<path d="M1791 938 C1797 955 1800 975 1799 995 C1797 1015 1785 1030 1765 1039" fill="none" stroke="#111111" stroke-width="1.4"/>
<rect x="1090" y="1124.5" width="740" height="1.2" fill="#2a2a2a" clip-path="url(#hclip)"/>
<rect x="8" y="374" width="600" height="50" fill="#3a4453"/>
<path d="M21.5 398.4 L29 392.3 V404.5Z M29 398.4 L36.6 392.3 V404.5Z" fill="#7a8799"/>
<text x="65.5" y="408.3" font-size="25" fill="#f2f3f5" textLength="111.5" lengthAdjust="spacingAndGlyphs" stroke="#f2f3f5" stroke-width="0.6">BROWSER</text>
<rect x="566" y="396" width="16" height="4" fill="#a7adb6"/>
<rect x="79" y="431" width="322" height="49" fill="#f1f2f3"/>
<rect x="115" y="479" width="302" height="49" fill="#f1f2f3"/>
<rect x="115" y="527" width="238" height="49" fill="#f1f2f3"/>
<rect x="115" y="575" width="208" height="49" fill="#f1f2f3"/>
<rect x="115" y="623" width="216" height="49" fill="#f1f2f3"/>
<rect x="115" y="671" width="240" height="49" fill="#f1f2f3"/>
<path d="M44 449.5 L52 458.5 L60 449.5" fill="none" stroke="#222" stroke-width="5.2" stroke-linejoin="round" stroke-linecap="round"/><path d="M44 449.5 L52 458.5 L60 449.5" fill="none" stroke="#ececec" stroke-width="2" stroke-linejoin="round" stroke-linecap="round"/>
<rect x="80" y="434.3" width="320" height="39.5" fill="#3a4453"/>
<rect x="130" y="434.3" width="220" height="39.5" fill="#212733"/>
<path d="M86 454 Q102 438 118 454 Q102 470 86 454Z" fill="#d6d6d6"/><circle cx="102" cy="454" r="5.8" fill="#c6c6c6" stroke="#2b3442" stroke-width="2.4"/>
<path d="M138 446 L145.5 439.7 H166 V461.5 L159.5 467.9 H138Z" fill="#6ec6f7"/><path d="M138 446 L145.5 439.7 H166 L159.5 446Z" fill="#a8ddfb"/><path d="M159.5 446 L166 439.7 V461.5 L159.5 467.9Z" fill="#4aaee8"/>
<text x="196.5" y="462" font-size="24" fill="#ffffff" font-weight="bold" textLength="133" lengthAdjust="spacingAndGlyphs">helmet final</text>
<circle cx="371.8" cy="453.6" r="11" fill="#ffffff"/><circle cx="371.8" cy="453.6" r="5.2" fill="#2a3240"/>
<rect x="116" y="482.1" width="300" height="39.5" fill="#3a4453"/>
<path d="M84.0 493.40000000000003 L93.0 501.90000000000003 L84.0 510.40000000000003" fill="none" stroke="#222" stroke-width="5.2" stroke-linejoin="round" stroke-linecap="round"/><path d="M84.0 493.40000000000003 L93.0 501.90000000000003 L84.0 510.40000000000003" fill="none" stroke="#ececec" stroke-width="2" stroke-linejoin="round" stroke-linecap="round"/>
<g fill="#b5b9c0"><rect x="134.0" y="485.90000000000003" width="7.6" height="8" transform="rotate(0 137.8 501.90000000000003)"/><rect x="134.0" y="485.90000000000003" width="7.6" height="8" transform="rotate(45 137.8 501.90000000000003)"/><rect x="134.0" y="485.90000000000003" width="7.6" height="8" transform="rotate(90 137.8 501.90000000000003)"/><rect x="134.0" y="485.90000000000003" width="7.6" height="8" transform="rotate(135 137.8 501.90000000000003)"/><rect x="134.0" y="485.90000000000003" width="7.6" height="8" transform="rotate(180 137.8 501.90000000000003)"/><rect x="134.0" y="485.90000000000003" width="7.6" height="8" transform="rotate(225 137.8 501.90000000000003)"/><rect x="134.0" y="485.90000000000003" width="7.6" height="8" transform="rotate(270 137.8 501.90000000000003)"/><rect x="134.0" y="485.90000000000003" width="7.6" height="8" transform="rotate(315 137.8 501.90000000000003)"/><circle cx="137.8" cy="501.90000000000003" r="11.5"/></g><circle cx="137.8" cy="501.90000000000003" r="4.8" fill="#3a4453"/>
<text x="182.5" y="509.70000000000005" font-size="23" fill="#f2f3f5" textLength="200.5" lengthAdjust="spacingAndGlyphs" stroke="#f2f3f5" stroke-width="0.8">Document Settings</text>
<rect x="116" y="530.5" width="236" height="39.5" fill="#3a4453"/>
<path d="M84.0 541.8 L93.0 550.3 L84.0 558.8" fill="none" stroke="#222" stroke-width="5.2" stroke-linejoin="round" stroke-linecap="round"/><path d="M84.0 541.8 L93.0 550.3 L84.0 558.8" fill="none" stroke="#ececec" stroke-width="2" stroke-linejoin="round" stroke-linecap="round"/>
<path d="M122 536.0 H134 L136.5 539.5 V541.0 H122Z" fill="#b9b9b9"/><path d="M122 540.0 H136.5 L138.5 538.0 H154 V564.0 H122Z" fill="#d6d6d6"/>
<text x="182.5" y="558.1" font-size="23" fill="#f2f3f5" textLength="141.8" lengthAdjust="spacingAndGlyphs" stroke="#f2f3f5" stroke-width="0.8">Named Views</text>
<rect x="116" y="578.2" width="206" height="39.5" fill="#3a4453"/>
<path d="M84.0 589.5 L93.0 598.0 L84.0 606.5" fill="none" stroke="#222" stroke-width="5.2" stroke-linejoin="round" stroke-linecap="round"/><path d="M84.0 589.5 L93.0 598.0 L84.0 606.5" fill="none" stroke="#ececec" stroke-width="2" stroke-linejoin="round" stroke-linecap="round"/>
<path d="M123 598.2 Q138 583.2 153 598.2 Q138 613.2 123 598.2Z" fill="none" stroke="#d2d2d2" stroke-width="2"/><circle cx="138" cy="598.2" r="5.5" fill="none" stroke="#d2d2d2" stroke-width="2"/><path d="M127 586.2 L151 610.2" stroke="#3a4453" stroke-width="4"/><path d="M127 586.2 L151 610.2" stroke="#d2d2d2" stroke-width="2"/>
<path d="M172 584.0 H184 L186.5 587.5 V589.0 H172Z" fill="#b9b9b9"/><path d="M172 588.0 H186.5 L188.5 586.0 H204 V612.0 H172Z" fill="#d6d6d6"/>
<text x="232.2" y="605.8000000000001" font-size="23" fill="#f2f3f5" textLength="64.8" lengthAdjust="spacingAndGlyphs" stroke="#f2f3f5" stroke-width="0.8">Origin</text>
<rect x="116" y="626.2" width="214" height="39.5" fill="#3a4453"/>
<path d="M84.0 637.5 L93.0 646.0 L84.0 654.5" fill="none" stroke="#222" stroke-width="5.2" stroke-linejoin="round" stroke-linecap="round"/><path d="M84.0 637.5 L93.0 646.0 L84.0 654.5" fill="none" stroke="#ececec" stroke-width="2" stroke-linejoin="round" stroke-linecap="round"/>
<path d="M122 646.2 Q138 630.2 154 646.2 Q138 662.2 122 646.2Z" fill="#d6d6d6"/><circle cx="138" cy="646.2" r="5.8" fill="#c6c6c6" stroke="#2b3442" stroke-width="2.4"/>
<path d="M172 632.0 H184 L186.5 635.5 V637.0 H172Z" fill="#b9b9b9"/><path d="M172 636.0 H186.5 L188.5 634.0 H204 V660.0 H172Z" fill="#d6d6d6"/>
<text x="232.2" y="653.8000000000001" font-size="23" fill="#f2f3f5" textLength="68.5" lengthAdjust="spacingAndGlyphs" stroke="#f2f3f5" stroke-width="0.8">Bodies</text>
<rect x="116" y="674.2" width="238" height="39.5" fill="#3a4453"/>
<path d="M84.0 685.5 L93.0 694.0 L84.0 702.5" fill="none" stroke="#222" stroke-width="5.2" stroke-linejoin="round" stroke-linecap="round"/><path d="M84.0 685.5 L93.0 694.0 L84.0 702.5" fill="none" stroke="#ececec" stroke-width="2" stroke-linejoin="round" stroke-linecap="round"/>
<path d="M122 694.2 Q138 678.2 154 694.2 Q138 710.2 122 694.2Z" fill="#d6d6d6"/><circle cx="138" cy="694.2" r="5.8" fill="#c6c6c6" stroke="#2b3442" stroke-width="2.4"/>
<path d="M172 680.0 H184 L186.5 683.5 V685.0 H172Z" fill="#b9b9b9"/><path d="M172 684.0 H186.5 L188.5 682.0 H204 V708.0 H172Z" fill="#d6d6d6"/>
<text x="232.2" y="701.8000000000001" font-size="23" fill="#f2f3f5" textLength="92.2" lengthAdjust="spacingAndGlyphs" stroke="#f2f3f5" stroke-width="0.8">Sketches</text>
<rect x="8" y="1806" width="600" height="50" fill="#3a4453"/>
<text x="64.5" y="1840.5" font-size="25" fill="#f2f3f5" textLength="130" lengthAdjust="spacingAndGlyphs" stroke="#f2f3f5" stroke-width="0.6">COMMENTS</text>
<path d="M566 1830.5 H582.5 M574.2 1822 V1839" stroke="#b5bac2" stroke-width="4"/>
<rect x="1274" y="1804" width="478" height="47.5" fill="#3a4453"/>
<path d="M1295.7 1809 V1845" stroke="#4fc3f7" stroke-width="2.6" stroke-dasharray="6 3"/>
<path d="M1303 1820.8 A15 6.2 0 1 1 1292 1820.3" fill="none" stroke="#fff" stroke-width="2.6"/>
<path d="M1302 1815.5 L1308.5 1821 L1301 1824.5Z" fill="#fff"/>
<path d="M1323.6 1824H1336.2L1329.9 1831.5Z" fill="#9aa0a9"/>
<path d="M1351 1822 L1360 1810 V1820 L1374 1814 V1822Z" fill="#cfcfcf"/>
<rect x="1350" y="1819.5" width="30" height="22.5" fill="#f0f0f0"/><rect x="1354.6" y="1825.2" width="20.4" height="11.6" fill="#62c4f7" stroke="#2a3442" stroke-width="1.6"/>
<path d="M1410 1844 L1400 1830 Q1398 1826.5 1402 1827 L1408 1832 V1815 Q1409 1812 1411.5 1815 L1413 1828 L1415 1811 Q1417 1809 1419 1811 L1419.5 1827 L1423 1813 Q1425.5 1811 1427 1814 L1425 1828 L1430.5 1818.5 Q1433.5 1817 1433.5 1820.5 L1427 1837 L1424 1844Z" fill="#dcdcdc"/>
<circle cx="1462.2" cy="1826.8" r="9.4" fill="#5e6572" stroke="#fff" stroke-width="2.4"/><path d="M1468.5 1833.5 L1477.5 1842.5" stroke="#e8a54a" stroke-width="3.2"/>
<path d="M1475 1816.5 H1486 M1480.5 1811 V1822 M1475 1824.5 H1486" stroke="#fff" stroke-width="2.2"/>
<rect x="1505" y="1811.5" width="31.5" height="31" fill="none" stroke="#fff" stroke-width="2.4" stroke-dasharray="5 3"/>
<circle cx="1519" cy="1824.5" r="10.5" fill="#5e6572" stroke="#ececec" stroke-width="2.4"/><path d="M1527 1833 L1535 1841" stroke="#e8a54a" stroke-width="3"/>
<path d="M1548.3 1824H1560L1554.15 1831.5Z" fill="#9aa0a9"/>
<rect x="1573" y="1815" width="30" height="22" fill="#3a4453" stroke="#f0f0f0" stroke-width="2.4"/><rect x="1576.5" y="1818.5" width="23" height="15" fill="#cdcdcd"/><path d="M1586 1837 V1840.5 M1579 1841 H1597" stroke="#f0f0f0" stroke-width="2.4"/>
<path d="M1610.3 1824H1621.9L1616.1 1831.5Z" fill="#9aa0a9"/>
<path d="M1635 1811 H1661 V1836.5 H1635Z M1635 1819.5 H1661 M1635 1828 H1661 M1643.7 1811 V1836.5 M1652.3 1811 V1836.5" fill="none" stroke="#f0f0f0" stroke-width="2.2"/>
<path d="M1672.3 1824H1683.8L1678.05 1831.5Z" fill="#9aa0a9"/>
<rect x="1696" y="1812" width="15" height="13" fill="#dadada"/><rect x="1699" y="1815" width="9" height="7" fill="#c4c4c4"/>
<rect x="1713" y="1812" width="15" height="13" fill="#dadada"/><rect x="1716" y="1815" width="9" height="7" fill="#c4c4c4"/>
<rect x="1696" y="1827" width="15" height="13" fill="#dadada"/><rect x="1699" y="1830" width="9" height="7" fill="#c4c4c4"/>
<rect x="1713" y="1827" width="15" height="13" fill="#dadada"/><rect x="1716" y="1830" width="9" height="7" fill="#c4c4c4"/>
<path d="M1734.3 1824H1745.8L1740.05 1831.5Z" fill="#9aa0a9"/>
<path d="M2983 1822 A15 15 0 1 0 2998.5 1837 V1852 H2983Z" fill="#161616"/><circle cx="2983.3" cy="1837" r="15.3" fill="#161616"/>
<path d="M2974 1837 L2984 1828 M2975 1843 L2991 1829 M2981 1845 L2993 1834" stroke="#fff" stroke-width="2.2"/>
<rect x="23.5" y="1914" width="4" height="24" fill="#a8aeb7"/><path d="M27.5 1926 L46 1914 V1938Z" fill="#a8aeb7"/>
<path d="M71.6 1926 L90 1914 V1938Z" fill="#a8aeb7"/><rect x="93.5" y="1921.5" width="4.5" height="9" fill="#a8aeb7"/>
<path d="M123.7 1913.5 L148 1926 L123.7 1938.5Z" fill="#a8aeb7"/>
<rect x="171.4" y="1921.5" width="4.5" height="9" fill="#a8aeb7"/><path d="M179 1914 L197.6 1926 L179 1938Z" fill="#a8aeb7"/>
<path d="M223.5 1914 L242 1926 L223.5 1938Z" fill="#a8aeb7"/><rect x="242.4" y="1914" width="4" height="24" fill="#a8aeb7"/>
<rect x="1387" y="1871" width="1247" height="12" rx="6" fill="#56616f"/>
<rect x="292" y="1948" width="2640" height="4" fill="#56616f"/>
<rect x="274" y="1948" width="7" height="4" fill="#56616f"/><rect x="284" y="1948" width="6" height="4" fill="#56616f"/>
<rect x="308.0" y="1937" width="4" height="12" fill="#5a6574"/>
<g transform="translate(292.0 1899)"><path d="M0 6.2 L5.5 0.7 H24.1 L18.3 6.2Z" fill="#a8ddfb"/><rect x="0" y="6.2" width="18.3" height="21" fill="#74c8f7"/><path d="M18.3 6.2 L24.1 0.7 V22.2 L18.3 27.2Z" fill="#4daee8"/><path d="M0 28 H18.3 L24.1 22.8 V27.5 L18.3 33.1 H0Z" fill="#e6e6e6"/><path d="M18.3 28 L24.1 22.8 V27.5 L18.3 33.1Z" fill="#bdbdbd"/><path d="M29.2 7 V27.2" stroke="#fff" stroke-width="2.2"/><path d="M26.2 7.5 L29.2 2.4 L32.2 7.5Z" fill="#fff"/></g>
<rect x="356.0" y="1937" width="4" height="12" fill="#5a6574"/>
<g transform="translate(341.5 1899)"><rect x="0" y="1.2" width="5.5" height="5.5" fill="#3fb7f2"/><rect x="26.5" y="1.2" width="5.5" height="5.5" fill="#3fb7f2"/><rect x="0" y="26.6" width="5.5" height="5.5" fill="#3fb7f2"/><path d="M7.5 3.9 H25 M3.2 8.5 V25 M7.5 29.3 H16 M29.2 8.5 V15.5" stroke="#ececec" stroke-width="2"/><path d="M17 33 L19.9 26.2 L27.85 18.5 L31.45 15 Q35.5 15.5 35.35 19 L31.75 22.5 L23.9 30.2Z" fill="#f6c94b" stroke="#1f2632" stroke-width="1.6" stroke-linejoin="round"/><path d="M27.85 18.5 L31.75 22.5 L35.35 19 Q35.5 15.5 31.45 15Z" fill="#f0474f"/><path d="M17 33 L19.9 26.2 L23.9 30.2Z" fill="#f2f2f2"/></g>
<rect x="403.9" y="1937" width="4" height="12" fill="#5a6574"/>
<g transform="translate(387.9 1899)"><path d="M0 6.2 L5.5 0.7 H24.1 L18.3 6.2Z" fill="#a8ddfb"/><rect x="0" y="6.2" width="18.3" height="21" fill="#74c8f7"/><path d="M18.3 6.2 L24.1 0.7 V22.2 L18.3 27.2Z" fill="#4daee8"/><path d="M0 28 H18.3 L24.1 22.8 V27.5 L18.3 33.1 H0Z" fill="#e6e6e6"/><path d="M18.3 28 L24.1 22.8 V27.5 L18.3 33.1Z" fill="#bdbdbd"/><path d="M29.2 7 V27.2" stroke="#fff" stroke-width="2.2"/><path d="M26.2 7.5 L29.2 2.4 L32.2 7.5Z" fill="#fff"/></g>
<rect x="451.9" y="1937" width="4" height="12" fill="#5a6574"/>
<g transform="translate(437.4 1899)"><rect x="0" y="1.2" width="5.5" height="5.5" fill="#3fb7f2"/><rect x="26.5" y="1.2" width="5.5" height="5.5" fill="#3fb7f2"/><rect x="0" y="26.6" width="5.5" height="5.5" fill="#3fb7f2"/><path d="M7.5 3.9 H25 M3.2 8.5 V25 M7.5 29.3 H16 M29.2 8.5 V15.5" stroke="#ececec" stroke-width="2"/><path d="M17 33 L19.9 26.2 L27.85 18.5 L31.45 15 Q35.5 15.5 35.35 19 L31.75 22.5 L23.9 30.2Z" fill="#f6c94b" stroke="#1f2632" stroke-width="1.6" stroke-linejoin="round"/><path d="M27.85 18.5 L31.75 22.5 L35.35 19 Q35.5 15.5 31.45 15Z" fill="#f0474f"/><path d="M17 33 L19.9 26.2 L23.9 30.2Z" fill="#f2f2f2"/></g>
<rect x="499.8" y="1937" width="4" height="12" fill="#5a6574"/>
<g transform="translate(483.8 1899)"><path d="M0 6.2 L5.5 0.7 H24.1 L18.3 6.2Z" fill="#a8ddfb"/><rect x="0" y="6.2" width="18.3" height="21" fill="#74c8f7"/><path d="M18.3 6.2 L24.1 0.7 V22.2 L18.3 27.2Z" fill="#4daee8"/><path d="M0 28 H18.3 L24.1 22.8 V27.5 L18.3 33.1 H0Z" fill="#e6e6e6"/><path d="M18.3 28 L24.1 22.8 V27.5 L18.3 33.1Z" fill="#bdbdbd"/><path d="M29.2 7 V27.2" stroke="#fff" stroke-width="2.2"/><path d="M26.2 7.5 L29.2 2.4 L32.2 7.5Z" fill="#fff"/></g>
<rect x="547.8" y="1937" width="4" height="12" fill="#5a6574"/>
<g transform="translate(533.3 1899)"><rect x="0" y="1.2" width="5.5" height="5.5" fill="#3fb7f2"/><rect x="26.5" y="1.2" width="5.5" height="5.5" fill="#3fb7f2"/><rect x="0" y="26.6" width="5.5" height="5.5" fill="#3fb7f2"/><path d="M7.5 3.9 H25 M3.2 8.5 V25 M7.5 29.3 H16 M29.2 8.5 V15.5" stroke="#ececec" stroke-width="2"/><path d="M17 33 L19.9 26.2 L27.85 18.5 L31.45 15 Q35.5 15.5 35.35 19 L31.75 22.5 L23.9 30.2Z" fill="#f6c94b" stroke="#1f2632" stroke-width="1.6" stroke-linejoin="round"/><path d="M27.85 18.5 L31.75 22.5 L35.35 19 Q35.5 15.5 31.45 15Z" fill="#f0474f"/><path d="M17 33 L19.9 26.2 L23.9 30.2Z" fill="#f2f2f2"/></g>
<rect x="595.8" y="1937" width="4" height="12" fill="#5a6574"/>
<g transform="translate(581.3 1899)"><rect x="0" y="1.2" width="5.5" height="5.5" fill="#3fb7f2"/><rect x="26.5" y="1.2" width="5.5" height="5.5" fill="#3fb7f2"/><rect x="0" y="26.6" width="5.5" height="5.5" fill="#3fb7f2"/><path d="M7.5 3.9 H25 M3.2 8.5 V25 M7.5 29.3 H16 M29.2 8.5 V15.5" stroke="#ececec" stroke-width="2"/><path d="M17 33 L19.9 26.2 L27.85 18.5 L31.45 15 Q35.5 15.5 35.35 19 L31.75 22.5 L23.9 30.2Z" fill="#f6c94b" stroke="#1f2632" stroke-width="1.6" stroke-linejoin="round"/><path d="M27.85 18.5 L31.75 22.5 L35.35 19 Q35.5 15.5 31.45 15Z" fill="#f0474f"/><path d="M17 33 L19.9 26.2 L23.9 30.2Z" fill="#f2f2f2"/></g>
<rect x="643.7" y="1937" width="4" height="12" fill="#5a6574"/>
<g transform="translate(627.7 1899)"><path d="M0 6.2 L5.5 0.7 H24.1 L18.3 6.2Z" fill="#a8ddfb"/><rect x="0" y="6.2" width="18.3" height="21" fill="#74c8f7"/><path d="M18.3 6.2 L24.1 0.7 V22.2 L18.3 27.2Z" fill="#4daee8"/><path d="M0 28 H18.3 L24.1 22.8 V27.5 L18.3 33.1 H0Z" fill="#e6e6e6"/><path d="M18.3 28 L24.1 22.8 V27.5 L18.3 33.1Z" fill="#bdbdbd"/><path d="M29.2 7 V27.2" stroke="#fff" stroke-width="2.2"/><path d="M26.2 7.5 L29.2 2.4 L32.2 7.5Z" fill="#fff"/></g>
<rect x="691.7" y="1937" width="4" height="12" fill="#5a6574"/>
<g transform="translate(677.2 1899)"><rect x="0" y="1.2" width="5.5" height="5.5" fill="#3fb7f2"/><rect x="26.5" y="1.2" width="5.5" height="5.5" fill="#3fb7f2"/><rect x="0" y="26.6" width="5.5" height="5.5" fill="#3fb7f2"/><path d="M7.5 3.9 H25 M3.2 8.5 V25 M7.5 29.3 H16 M29.2 8.5 V15.5" stroke="#ececec" stroke-width="2"/><path d="M17 33 L19.9 26.2 L27.85 18.5 L31.45 15 Q35.5 15.5 35.35 19 L31.75 22.5 L23.9 30.2Z" fill="#f6c94b" stroke="#1f2632" stroke-width="1.6" stroke-linejoin="round"/><path d="M27.85 18.5 L31.75 22.5 L35.35 19 Q35.5 15.5 31.45 15Z" fill="#f0474f"/><path d="M17 33 L19.9 26.2 L23.9 30.2Z" fill="#f2f2f2"/></g>
<rect x="739.6" y="1937" width="4" height="12" fill="#5a6574"/>
<g transform="translate(725.1 1899)"><rect x="0" y="1.2" width="5.5" height="5.5" fill="#3fb7f2"/><rect x="26.5" y="1.2" width="5.5" height="5.5" fill="#3fb7f2"/><rect x="0" y="26.6" width="5.5" height="5.5" fill="#3fb7f2"/><path d="M7.5 3.9 H25 M3.2 8.5 V25 M7.5 29.3 H16 M29.2 8.5 V15.5" stroke="#ececec" stroke-width="2"/><path d="M17 33 L19.9 26.2 L27.85 18.5 L31.45 15 Q35.5 15.5 35.35 19 L31.75 22.5 L23.9 30.2Z" fill="#f6c94b" stroke="#1f2632" stroke-width="1.6" stroke-linejoin="round"/><path d="M27.85 18.5 L31.75 22.5 L35.35 19 Q35.5 15.5 31.45 15Z" fill="#f0474f"/><path d="M17 33 L19.9 26.2 L23.9 30.2Z" fill="#f2f2f2"/></g>
<rect x="787.6" y="1937" width="4" height="12" fill="#5a6574"/>
<g transform="translate(771.6 1899)"><path d="M0 6.2 L5.5 0.7 H24.1 L18.3 6.2Z" fill="#a8ddfb"/><rect x="0" y="6.2" width="18.3" height="21" fill="#74c8f7"/><path d="M18.3 6.2 L24.1 0.7 V22.2 L18.3 27.2Z" fill="#4daee8"/><path d="M0 28 H18.3 L24.1 22.8 V27.5 L18.3 33.1 H0Z" fill="#e6e6e6"/><path d="M18.3 28 L24.1 22.8 V27.5 L18.3 33.1Z" fill="#bdbdbd"/><path d="M29.2 7 V27.2" stroke="#fff" stroke-width="2.2"/><path d="M26.2 7.5 L29.2 2.4 L32.2 7.5Z" fill="#fff"/></g>
<rect x="835.6" y="1937" width="4" height="12" fill="#5a6574"/>
<g transform="translate(821.1 1899)"><rect x="0" y="1.2" width="5.5" height="5.5" fill="#3fb7f2"/><rect x="26.5" y="1.2" width="5.5" height="5.5" fill="#3fb7f2"/><rect x="0" y="26.6" width="5.5" height="5.5" fill="#3fb7f2"/><path d="M7.5 3.9 H25 M3.2 8.5 V25 M7.5 29.3 H16 M29.2 8.5 V15.5" stroke="#ececec" stroke-width="2"/><path d="M17 33 L19.9 26.2 L27.85 18.5 L31.45 15 Q35.5 15.5 35.35 19 L31.75 22.5 L23.9 30.2Z" fill="#f6c94b" stroke="#1f2632" stroke-width="1.6" stroke-linejoin="round"/><path d="M27.85 18.5 L31.75 22.5 L35.35 19 Q35.5 15.5 31.45 15Z" fill="#f0474f"/><path d="M17 33 L19.9 26.2 L23.9 30.2Z" fill="#f2f2f2"/></g>
<rect x="883.5" y="1937" width="4" height="12" fill="#5a6574"/>
<g transform="translate(869.0 1899)"><rect x="0" y="1.2" width="5.5" height="5.5" fill="#3fb7f2"/><rect x="26.5" y="1.2" width="5.5" height="5.5" fill="#3fb7f2"/><rect x="0" y="26.6" width="5.5" height="5.5" fill="#3fb7f2"/><path d="M7.5 3.9 H25 M3.2 8.5 V25 M7.5 29.3 H16 M29.2 8.5 V15.5" stroke="#ececec" stroke-width="2"/><path d="M17 33 L19.9 26.2 L27.85 18.5 L31.45 15 Q35.5 15.5 35.35 19 L31.75 22.5 L23.9 30.2Z" fill="#f6c94b" stroke="#1f2632" stroke-width="1.6" stroke-linejoin="round"/><path d="M27.85 18.5 L31.75 22.5 L35.35 19 Q35.5 15.5 31.45 15Z" fill="#f0474f"/><path d="M17 33 L19.9 26.2 L23.9 30.2Z" fill="#f2f2f2"/></g>
<rect x="931.5" y="1937" width="4" height="12" fill="#5a6574"/>
<g transform="translate(917.5 1899)"><path d="M0 9.2 L6 1.2 H14 L9.2 9.2Z" fill="#f2f2f2"/><path d="M0 9.2 H10.5 A13.5 13.5 0 0 1 24 22.7 V32.7 H0Z" fill="#dddddd"/><path d="M10.5 9.2 L15 1.2 A18 18 0 0 1 32 14.6 L24 22.7 A13.5 13.5 0 0 0 10.5 9.2Z" fill="#74c8f7" stroke="#1f2632" stroke-width="1.2"/><path d="M24 22.7 L32 14.6 V24.7 L24 32.7Z" fill="#bdbdbd"/></g>
<rect x="979.4" y="1937" width="4" height="12" fill="#5a6574"/>
<g transform="translate(965.4 1899)"><path d="M0 9.2 L6 1.2 H14 L9.2 9.2Z" fill="#f2f2f2"/><path d="M0 9.2 H10.5 A13.5 13.5 0 0 1 24 22.7 V32.7 H0Z" fill="#dddddd"/><path d="M10.5 9.2 L15 1.2 A18 18 0 0 1 32 14.6 L24 22.7 A13.5 13.5 0 0 0 10.5 9.2Z" fill="#74c8f7" stroke="#1f2632" stroke-width="1.2"/><path d="M24 22.7 L32 14.6 V24.7 L24 32.7Z" fill="#bdbdbd"/></g>
<rect x="1027.4" y="1937" width="4" height="12" fill="#5a6574"/>
<g transform="translate(1012.9 1899)"><rect x="0" y="1.2" width="5.5" height="5.5" fill="#3fb7f2"/><rect x="26.5" y="1.2" width="5.5" height="5.5" fill="#3fb7f2"/><rect x="0" y="26.6" width="5.5" height="5.5" fill="#3fb7f2"/><path d="M7.5 3.9 H25 M3.2 8.5 V25 M7.5 29.3 H16 M29.2 8.5 V15.5" stroke="#ececec" stroke-width="2"/><path d="M17 33 L19.9 26.2 L27.85 18.5 L31.45 15 Q35.5 15.5 35.35 19 L31.75 22.5 L23.9 30.2Z" fill="#f6c94b" stroke="#1f2632" stroke-width="1.6" stroke-linejoin="round"/><path d="M27.85 18.5 L31.75 22.5 L35.35 19 Q35.5 15.5 31.45 15Z" fill="#f0474f"/><path d="M17 33 L19.9 26.2 L23.9 30.2Z" fill="#f2f2f2"/></g>
<rect x="1075.4" y="1937" width="4" height="12" fill="#5a6574"/>
<g transform="translate(1060.9 1899)"><rect x="0" y="1.2" width="5.5" height="5.5" fill="#3fb7f2"/><rect x="26.5" y="1.2" width="5.5" height="5.5" fill="#3fb7f2"/><rect x="0" y="26.6" width="5.5" height="5.5" fill="#3fb7f2"/><path d="M7.5 3.9 H25 M3.2 8.5 V25 M7.5 29.3 H16 M29.2 8.5 V15.5" stroke="#ececec" stroke-width="2"/><path d="M17 33 L19.9 26.2 L27.85 18.5 L31.45 15 Q35.5 15.5 35.35 19 L31.75 22.5 L23.9 30.2Z" fill="#f6c94b" stroke="#1f2632" stroke-width="1.6" stroke-linejoin="round"/><path d="M27.85 18.5 L31.75 22.5 L35.35 19 Q35.5 15.5 31.45 15Z" fill="#f0474f"/><path d="M17 33 L19.9 26.2 L23.9 30.2Z" fill="#f2f2f2"/></g>
<rect x="1123.3" y="1937" width="4" height="12" fill="#5a6574"/>
<g transform="translate(1108.8 1899)"><rect x="0" y="1.2" width="5.5" height="5.5" fill="#3fb7f2"/><rect x="26.5" y="1.2" width="5.5" height="5.5" fill="#3fb7f2"/><rect x="0" y="26.6" width="5.5" height="5.5" fill="#3fb7f2"/><path d="M7.5 3.9 H25 M3.2 8.5 V25 M7.5 29.3 H16 M29.2 8.5 V15.5" stroke="#ececec" stroke-width="2"/><path d="M17 33 L19.9 26.2 L27.85 18.5 L31.45 15 Q35.5 15.5 35.35 19 L31.75 22.5 L23.9 30.2Z" fill="#f6c94b" stroke="#1f2632" stroke-width="1.6" stroke-linejoin="round"/><path d="M27.85 18.5 L31.75 22.5 L35.35 19 Q35.5 15.5 31.45 15Z" fill="#f0474f"/><path d="M17 33 L19.9 26.2 L23.9 30.2Z" fill="#f2f2f2"/></g>
<rect x="1171.3" y="1937" width="4" height="12" fill="#5a6574"/>
<g transform="translate(1157.3 1899)"><path d="M0 0.9 H11 A21 21 0 0 1 32 21.9 V33 H0Z" fill="#f2f2f2"/><path d="M0 18 Q10 16 16 33 H0Z" fill="#d6d6d6"/><g transform="rotate(-45 16 16)"><path d="M8 9 H22 M8 9 V23 H22 M8 16 H19" fill="none" stroke="#46b8f2" stroke-width="3.2"/></g></g>
<rect x="1219.2" y="1937" width="4" height="12" fill="#5a6574"/>
<g transform="translate(1204.7 1899)"><rect x="0" y="1.2" width="5.5" height="5.5" fill="#3fb7f2"/><rect x="26.5" y="1.2" width="5.5" height="5.5" fill="#3fb7f2"/><rect x="0" y="26.6" width="5.5" height="5.5" fill="#3fb7f2"/><path d="M7.5 3.9 H25 M3.2 8.5 V25 M7.5 29.3 H16 M29.2 8.5 V15.5" stroke="#ececec" stroke-width="2"/><path d="M17 33 L19.9 26.2 L27.85 18.5 L31.45 15 Q35.5 15.5 35.35 19 L31.75 22.5 L23.9 30.2Z" fill="#f6c94b" stroke="#1f2632" stroke-width="1.6" stroke-linejoin="round"/><path d="M27.85 18.5 L31.75 22.5 L35.35 19 Q35.5 15.5 31.45 15Z" fill="#f0474f"/><path d="M17 33 L19.9 26.2 L23.9 30.2Z" fill="#f2f2f2"/></g>
<rect x="1267.2" y="1937" width="4" height="12" fill="#5a6574"/>
<g transform="translate(1252.7 1899)"><rect x="0" y="1.2" width="5.5" height="5.5" fill="#3fb7f2"/><rect x="26.5" y="1.2" width="5.5" height="5.5" fill="#3fb7f2"/><rect x="0" y="26.6" width="5.5" height="5.5" fill="#3fb7f2"/><path d="M7.5 3.9 H25 M3.2 8.5 V25 M7.5 29.3 H16 M29.2 8.5 V15.5" stroke="#ececec" stroke-width="2"/><path d="M17 33 L19.9 26.2 L27.85 18.5 L31.45 15 Q35.5 15.5 35.35 19 L31.75 22.5 L23.9 30.2Z" fill="#f6c94b" stroke="#1f2632" stroke-width="1.6" stroke-linejoin="round"/><path d="M27.85 18.5 L31.75 22.5 L35.35 19 Q35.5 15.5 31.45 15Z" fill="#f0474f"/><path d="M17 33 L19.9 26.2 L23.9 30.2Z" fill="#f2f2f2"/></g>
<rect x="1315.2" y="1937" width="4" height="12" fill="#5a6574"/>
<g transform="translate(1299.2 1899)"><path d="M0 6.2 L5.5 0.7 H24.1 L18.3 6.2Z" fill="#a8ddfb"/><rect x="0" y="6.2" width="18.3" height="21" fill="#74c8f7"/><path d="M18.3 6.2 L24.1 0.7 V22.2 L18.3 27.2Z" fill="#4daee8"/><path d="M0 28 H18.3 L24.1 22.8 V27.5 L18.3 33.1 H0Z" fill="#e6e6e6"/><path d="M18.3 28 L24.1 22.8 V27.5 L18.3 33.1Z" fill="#bdbdbd"/><path d="M29.2 7 V27.2" stroke="#fff" stroke-width="2.2"/><path d="M26.2 7.5 L29.2 2.4 L32.2 7.5Z" fill="#fff"/></g>
<rect x="1363.1" y="1937" width="4" height="12" fill="#5a6574"/>
<g transform="translate(1349.1 1899)"><path d="M0 9.2 L6 1.2 H14 L9.2 9.2Z" fill="#f2f2f2"/><path d="M0 9.2 H10.5 A13.5 13.5 0 0 1 24 22.7 V32.7 H0Z" fill="#dddddd"/><path d="M10.5 9.2 L15 1.2 A18 18 0 0 1 32 14.6 L24 22.7 A13.5 13.5 0 0 0 10.5 9.2Z" fill="#74c8f7" stroke="#1f2632" stroke-width="1.2"/><path d="M24 22.7 L32 14.6 V24.7 L24 32.7Z" fill="#bdbdbd"/></g>
<rect x="1411.1" y="1937" width="4" height="12" fill="#5a6574"/>
<g transform="translate(1396.6 1899)"><rect x="0" y="1.2" width="5.5" height="5.5" fill="#3fb7f2"/><rect x="26.5" y="1.2" width="5.5" height="5.5" fill="#3fb7f2"/><rect x="0" y="26.6" width="5.5" height="5.5" fill="#3fb7f2"/><path d="M7.5 3.9 H25 M3.2 8.5 V25 M7.5 29.3 H16 M29.2 8.5 V15.5" stroke="#ececec" stroke-width="2"/><path d="M17 33 L19.9 26.2 L27.85 18.5 L31.45 15 Q35.5 15.5 35.35 19 L31.75 22.5 L23.9 30.2Z" fill="#f6c94b" stroke="#1f2632" stroke-width="1.6" stroke-linejoin="round"/><path d="M27.85 18.5 L31.75 22.5 L35.35 19 Q35.5 15.5 31.45 15Z" fill="#f0474f"/><path d="M17 33 L19.9 26.2 L23.9 30.2Z" fill="#f2f2f2"/></g>
<rect x="1459.0" y="1937" width="4" height="12" fill="#5a6574"/>
<g transform="translate(1444.5 1899)"><rect x="0" y="1.2" width="5.5" height="5.5" fill="#3fb7f2"/><rect x="26.5" y="1.2" width="5.5" height="5.5" fill="#3fb7f2"/><rect x="0" y="26.6" width="5.5" height="5.5" fill="#3fb7f2"/><path d="M7.5 3.9 H25 M3.2 8.5 V25 M7.5 29.3 H16 M29.2 8.5 V15.5" stroke="#ececec" stroke-width="2"/><path d="M17 33 L19.9 26.2 L27.85 18.5 L31.45 15 Q35.5 15.5 35.35 19 L31.75 22.5 L23.9 30.2Z" fill="#f6c94b" stroke="#1f2632" stroke-width="1.6" stroke-linejoin="round"/><path d="M27.85 18.5 L31.75 22.5 L35.35 19 Q35.5 15.5 31.45 15Z" fill="#f0474f"/><path d="M17 33 L19.9 26.2 L23.9 30.2Z" fill="#f2f2f2"/></g>
<rect x="1507.0" y="1937" width="4" height="12" fill="#5a6574"/>
<g transform="translate(1491.0 1899)"><path d="M0 6.2 L5.5 0.7 H24.1 L18.3 6.2Z" fill="#a8ddfb"/><rect x="0" y="6.2" width="18.3" height="21" fill="#74c8f7"/><path d="M18.3 6.2 L24.1 0.7 V22.2 L18.3 27.2Z" fill="#4daee8"/><path d="M0 28 H18.3 L24.1 22.8 V27.5 L18.3 33.1 H0Z" fill="#e6e6e6"/><path d="M18.3 28 L24.1 22.8 V27.5 L18.3 33.1Z" fill="#bdbdbd"/><path d="M29.2 7 V27.2" stroke="#fff" stroke-width="2.2"/><path d="M26.2 7.5 L29.2 2.4 L32.2 7.5Z" fill="#fff"/></g>
<rect x="1555.0" y="1937" width="4" height="12" fill="#5a6574"/>
<g transform="translate(1541.0 1899)"><path d="M0 9.2 L6 1.2 H14 L9.2 9.2Z" fill="#f2f2f2"/><path d="M0 9.2 H10.5 A13.5 13.5 0 0 1 24 22.7 V32.7 H0Z" fill="#dddddd"/><path d="M10.5 9.2 L15 1.2 A18 18 0 0 1 32 14.6 L24 22.7 A13.5 13.5 0 0 0 10.5 9.2Z" fill="#74c8f7" stroke="#1f2632" stroke-width="1.2"/><path d="M24 22.7 L32 14.6 V24.7 L24 32.7Z" fill="#bdbdbd"/></g>
<rect x="1602.9" y="1937" width="4" height="12" fill="#5a6574"/>
<g transform="translate(1588.4 1899)"><rect x="0" y="1.2" width="5.5" height="5.5" fill="#3fb7f2"/><rect x="26.5" y="1.2" width="5.5" height="5.5" fill="#3fb7f2"/><rect x="0" y="26.6" width="5.5" height="5.5" fill="#3fb7f2"/><path d="M7.5 3.9 H25 M3.2 8.5 V25 M7.5 29.3 H16 M29.2 8.5 V15.5" stroke="#ececec" stroke-width="2"/><path d="M17 33 L19.9 26.2 L27.85 18.5 L31.45 15 Q35.5 15.5 35.35 19 L31.75 22.5 L23.9 30.2Z" fill="#f6c94b" stroke="#1f2632" stroke-width="1.6" stroke-linejoin="round"/><path d="M27.85 18.5 L31.75 22.5 L35.35 19 Q35.5 15.5 31.45 15Z" fill="#f0474f"/><path d="M17 33 L19.9 26.2 L23.9 30.2Z" fill="#f2f2f2"/></g>
<rect x="1650.9" y="1937" width="4" height="12" fill="#5a6574"/>
<g transform="translate(1634.9 1899)"><path d="M0 6.2 L5.5 0.7 H24.1 L18.3 6.2Z" fill="#a8ddfb"/><rect x="0" y="6.2" width="18.3" height="21" fill="#74c8f7"/><path d="M18.3 6.2 L24.1 0.7 V22.2 L18.3 27.2Z" fill="#4daee8"/><path d="M0 28 H18.3 L24.1 22.8 V27.5 L18.3 33.1 H0Z" fill="#e6e6e6"/><path d="M18.3 28 L24.1 22.8 V27.5 L18.3 33.1Z" fill="#bdbdbd"/><path d="M29.2 7 V27.2" stroke="#fff" stroke-width="2.2"/><path d="M26.2 7.5 L29.2 2.4 L32.2 7.5Z" fill="#fff"/></g>
<rect x="1698.8" y="1937" width="4" height="12" fill="#5a6574"/>
<g transform="translate(1684.8 1899)"><path d="M0 9.2 L6 1.2 H14 L9.2 9.2Z" fill="#f2f2f2"/><path d="M0 9.2 H10.5 A13.5 13.5 0 0 1 24 22.7 V32.7 H0Z" fill="#dddddd"/><path d="M10.5 9.2 L15 1.2 A18 18 0 0 1 32 14.6 L24 22.7 A13.5 13.5 0 0 0 10.5 9.2Z" fill="#74c8f7" stroke="#1f2632" stroke-width="1.2"/><path d="M24 22.7 L32 14.6 V24.7 L24 32.7Z" fill="#bdbdbd"/></g>
<rect x="1746.8" y="1937" width="4" height="12" fill="#5a6574"/>
<g transform="translate(1732.3 1899)"><rect x="0" y="1.2" width="5.5" height="5.5" fill="#3fb7f2"/><rect x="26.5" y="1.2" width="5.5" height="5.5" fill="#3fb7f2"/><rect x="0" y="26.6" width="5.5" height="5.5" fill="#3fb7f2"/><path d="M7.5 3.9 H25 M3.2 8.5 V25 M7.5 29.3 H16 M29.2 8.5 V15.5" stroke="#ececec" stroke-width="2"/><path d="M17 33 L19.9 26.2 L27.85 18.5 L31.45 15 Q35.5 15.5 35.35 19 L31.75 22.5 L23.9 30.2Z" fill="#f6c94b" stroke="#1f2632" stroke-width="1.6" stroke-linejoin="round"/><path d="M27.85 18.5 L31.75 22.5 L35.35 19 Q35.5 15.5 31.45 15Z" fill="#f0474f"/><path d="M17 33 L19.9 26.2 L23.9 30.2Z" fill="#f2f2f2"/></g>
<rect x="1794.8" y="1937" width="4" height="12" fill="#5a6574"/>
<g transform="translate(1780.3 1899)"><rect x="0" y="1.2" width="5.5" height="5.5" fill="#3fb7f2"/><rect x="26.5" y="1.2" width="5.5" height="5.5" fill="#3fb7f2"/><rect x="0" y="26.6" width="5.5" height="5.5" fill="#3fb7f2"/><path d="M7.5 3.9 H25 M3.2 8.5 V25 M7.5 29.3 H16 M29.2 8.5 V15.5" stroke="#ececec" stroke-width="2"/><path d="M17 33 L19.9 26.2 L27.85 18.5 L31.45 15 Q35.5 15.5 35.35 19 L31.75 22.5 L23.9 30.2Z" fill="#f6c94b" stroke="#1f2632" stroke-width="1.6" stroke-linejoin="round"/><path d="M27.85 18.5 L31.75 22.5 L35.35 19 Q35.5 15.5 31.45 15Z" fill="#f0474f"/><path d="M17 33 L19.9 26.2 L23.9 30.2Z" fill="#f2f2f2"/></g>
<rect x="1842.7" y="1937" width="4" height="12" fill="#5a6574"/>
<g transform="translate(1826.7 1899)"><path d="M0 6.2 L5.5 0.7 H24.1 L18.3 6.2Z" fill="#a8ddfb"/><rect x="0" y="6.2" width="18.3" height="21" fill="#74c8f7"/><path d="M18.3 6.2 L24.1 0.7 V22.2 L18.3 27.2Z" fill="#4daee8"/><path d="M0 28 H18.3 L24.1 22.8 V27.5 L18.3 33.1 H0Z" fill="#e6e6e6"/><path d="M18.3 28 L24.1 22.8 V27.5 L18.3 33.1Z" fill="#bdbdbd"/><path d="M29.2 7 V27.2" stroke="#fff" stroke-width="2.2"/><path d="M26.2 7.5 L29.2 2.4 L32.2 7.5Z" fill="#fff"/></g>
<rect x="1890.7" y="1937" width="4" height="12" fill="#5a6574"/>
<g transform="translate(1876.7 1899)"><path d="M0 9.2 L6 1.2 H14 L9.2 9.2Z" fill="#f2f2f2"/><path d="M0 9.2 H10.5 A13.5 13.5 0 0 1 24 22.7 V32.7 H0Z" fill="#dddddd"/><path d="M10.5 9.2 L15 1.2 A18 18 0 0 1 32 14.6 L24 22.7 A13.5 13.5 0 0 0 10.5 9.2Z" fill="#74c8f7" stroke="#1f2632" stroke-width="1.2"/><path d="M24 22.7 L32 14.6 V24.7 L24 32.7Z" fill="#bdbdbd"/></g>
<rect x="1938.6" y="1937" width="4" height="12" fill="#5a6574"/>
<g transform="translate(1924.1 1899)"><rect x="0" y="1.2" width="5.5" height="5.5" fill="#3fb7f2"/><rect x="26.5" y="1.2" width="5.5" height="5.5" fill="#3fb7f2"/><rect x="0" y="26.6" width="5.5" height="5.5" fill="#3fb7f2"/><path d="M7.5 3.9 H25 M3.2 8.5 V25 M7.5 29.3 H16 M29.2 8.5 V15.5" stroke="#ececec" stroke-width="2"/><path d="M17 33 L19.9 26.2 L27.85 18.5 L31.45 15 Q35.5 15.5 35.35 19 L31.75 22.5 L23.9 30.2Z" fill="#f6c94b" stroke="#1f2632" stroke-width="1.6" stroke-linejoin="round"/><path d="M27.85 18.5 L31.75 22.5 L35.35 19 Q35.5 15.5 31.45 15Z" fill="#f0474f"/><path d="M17 33 L19.9 26.2 L23.9 30.2Z" fill="#f2f2f2"/></g>
<rect x="1986.6" y="1937" width="4" height="12" fill="#5a6574"/>
<g transform="translate(1972.1 1899)"><rect x="0" y="1.2" width="5.5" height="5.5" fill="#3fb7f2"/><rect x="26.5" y="1.2" width="5.5" height="5.5" fill="#3fb7f2"/><rect x="0" y="26.6" width="5.5" height="5.5" fill="#3fb7f2"/><path d="M7.5 3.9 H25 M3.2 8.5 V25 M7.5 29.3 H16 M29.2 8.5 V15.5" stroke="#ececec" stroke-width="2"/><path d="M17 33 L19.9 26.2 L27.85 18.5 L31.45 15 Q35.5 15.5 35.35 19 L31.75 22.5 L23.9 30.2Z" fill="#f6c94b" stroke="#1f2632" stroke-width="1.6" stroke-linejoin="round"/><path d="M27.85 18.5 L31.75 22.5 L35.35 19 Q35.5 15.5 31.45 15Z" fill="#f0474f"/><path d="M17 33 L19.9 26.2 L23.9 30.2Z" fill="#f2f2f2"/></g>
<rect x="2034.6" y="1937" width="4" height="12" fill="#5a6574"/>
<g transform="translate(2021.1 1899)"><rect x="0" y="0.7" width="30.5" height="30.5" fill="#74c8f7" stroke="#1f2632" stroke-width="1"/><rect x="0" y="13.3" width="17.7" height="17.9" fill="#dddddd" stroke="#1f2632" stroke-width="1"/></g>
<rect x="2082.5" y="1937" width="4" height="12" fill="#5a6574"/>
<g transform="translate(2068.0 1899)"><rect x="0" y="1.2" width="5.5" height="5.5" fill="#3fb7f2"/><rect x="26.5" y="1.2" width="5.5" height="5.5" fill="#3fb7f2"/><rect x="0" y="26.6" width="5.5" height="5.5" fill="#3fb7f2"/><path d="M7.5 3.9 H25 M3.2 8.5 V25 M7.5 29.3 H16 M29.2 8.5 V15.5" stroke="#ececec" stroke-width="2"/><path d="M17 33 L19.9 26.2 L27.85 18.5 L31.45 15 Q35.5 15.5 35.35 19 L31.75 22.5 L23.9 30.2Z" fill="#f6c94b" stroke="#1f2632" stroke-width="1.6" stroke-linejoin="round"/><path d="M27.85 18.5 L31.75 22.5 L35.35 19 Q35.5 15.5 31.45 15Z" fill="#f0474f"/><path d="M17 33 L19.9 26.2 L23.9 30.2Z" fill="#f2f2f2"/></g>
<rect x="2130.5" y="1937" width="4" height="12" fill="#5a6574"/>
<g transform="translate(2116.0 1899)"><rect x="0" y="1.2" width="5.5" height="5.5" fill="#3fb7f2"/><rect x="26.5" y="1.2" width="5.5" height="5.5" fill="#3fb7f2"/><rect x="0" y="26.6" width="5.5" height="5.5" fill="#3fb7f2"/><path d="M7.5 3.9 H25 M3.2 8.5 V25 M7.5 29.3 H16 M29.2 8.5 V15.5" stroke="#ececec" stroke-width="2"/><path d="M17 33 L19.9 26.2 L27.85 18.5 L31.45 15 Q35.5 15.5 35.35 19 L31.75 22.5 L23.9 30.2Z" fill="#f6c94b" stroke="#1f2632" stroke-width="1.6" stroke-linejoin="round"/><path d="M27.85 18.5 L31.75 22.5 L35.35 19 Q35.5 15.5 31.45 15Z" fill="#f0474f"/><path d="M17 33 L19.9 26.2 L23.9 30.2Z" fill="#f2f2f2"/></g>
<rect x="2178.4" y="1937" width="4" height="12" fill="#5a6574"/>
<g transform="translate(2163.9 1899)"><rect x="0" y="1.2" width="5.5" height="5.5" fill="#3fb7f2"/><rect x="26.5" y="1.2" width="5.5" height="5.5" fill="#3fb7f2"/><rect x="0" y="26.6" width="5.5" height="5.5" fill="#3fb7f2"/><path d="M7.5 3.9 H25 M3.2 8.5 V25 M7.5 29.3 H16 M29.2 8.5 V15.5" stroke="#ececec" stroke-width="2"/><path d="M17 33 L19.9 26.2 L27.85 18.5 L31.45 15 Q35.5 15.5 35.35 19 L31.75 22.5 L23.9 30.2Z" fill="#f6c94b" stroke="#1f2632" stroke-width="1.6" stroke-linejoin="round"/><path d="M27.85 18.5 L31.75 22.5 L35.35 19 Q35.5 15.5 31.45 15Z" fill="#f0474f"/><path d="M17 33 L19.9 26.2 L23.9 30.2Z" fill="#f2f2f2"/></g>
<rect x="2226.4" y="1937" width="4" height="12" fill="#5a6574"/>
<g transform="translate(2210.4 1899)"><path d="M0 6.2 L5.5 0.7 H24.1 L18.3 6.2Z" fill="#a8ddfb"/><rect x="0" y="6.2" width="18.3" height="21" fill="#74c8f7"/><path d="M18.3 6.2 L24.1 0.7 V22.2 L18.3 27.2Z" fill="#4daee8"/><path d="M0 28 H18.3 L24.1 22.8 V27.5 L18.3 33.1 H0Z" fill="#e6e6e6"/><path d="M18.3 28 L24.1 22.8 V27.5 L18.3 33.1Z" fill="#bdbdbd"/><path d="M29.2 7 V27.2" stroke="#fff" stroke-width="2.2"/><path d="M26.2 7.5 L29.2 2.4 L32.2 7.5Z" fill="#fff"/></g>
<rect x="2274.4" y="1937" width="4" height="12" fill="#5a6574"/>
<g transform="translate(2263.4 1899)"><path d="M0 1 L7.5 8.5 M7.5 1 L0 8.5" stroke="#ff3b3b" stroke-width="2.8"/><path d="M11 16.5 L14.5 12.5 H28 L24.5 16.5Z" fill="#fafafa"/><rect x="11" y="16.5" width="13.5" height="14.5" fill="#b8e4f8" stroke="#1e6fd0" stroke-width="1.2"/><path d="M24.5 16.5 L28 12.5 V27 L24.5 31Z" fill="#e8e8e8"/></g>
<rect x="2322.3" y="1937" width="4" height="12" fill="#5a6574"/>
<g transform="translate(2307.8 1899)"><rect x="0" y="1.2" width="5.5" height="5.5" fill="#3fb7f2"/><rect x="26.5" y="1.2" width="5.5" height="5.5" fill="#3fb7f2"/><rect x="0" y="26.6" width="5.5" height="5.5" fill="#3fb7f2"/><path d="M7.5 3.9 H25 M3.2 8.5 V25 M7.5 29.3 H16 M29.2 8.5 V15.5" stroke="#ececec" stroke-width="2"/><path d="M17 33 L19.9 26.2 L27.85 18.5 L31.45 15 Q35.5 15.5 35.35 19 L31.75 22.5 L23.9 30.2Z" fill="#f6c94b" stroke="#1f2632" stroke-width="1.6" stroke-linejoin="round"/><path d="M27.85 18.5 L31.75 22.5 L35.35 19 Q35.5 15.5 31.45 15Z" fill="#f0474f"/><path d="M17 33 L19.9 26.2 L23.9 30.2Z" fill="#f2f2f2"/></g>
<rect x="2370.3" y="1937" width="4" height="12" fill="#5a6574"/>
<g transform="translate(2355.8 1899)"><rect x="0" y="1.2" width="5.5" height="5.5" fill="#3fb7f2"/><rect x="26.5" y="1.2" width="5.5" height="5.5" fill="#3fb7f2"/><rect x="0" y="26.6" width="5.5" height="5.5" fill="#3fb7f2"/><path d="M7.5 3.9 H25 M3.2 8.5 V25 M7.5 29.3 H16 M29.2 8.5 V15.5" stroke="#ececec" stroke-width="2"/><path d="M17 33 L19.9 26.2 L27.85 18.5 L31.45 15 Q35.5 15.5 35.35 19 L31.75 22.5 L23.9 30.2Z" fill="#f6c94b" stroke="#1f2632" stroke-width="1.6" stroke-linejoin="round"/><path d="M27.85 18.5 L31.75 22.5 L35.35 19 Q35.5 15.5 31.45 15Z" fill="#f0474f"/><path d="M17 33 L19.9 26.2 L23.9 30.2Z" fill="#f2f2f2"/></g>
<rect x="2418.2" y="1937" width="4" height="12" fill="#5a6574"/>
<g transform="translate(2403.7 1899)"><rect x="0" y="1.2" width="5.5" height="5.5" fill="#3fb7f2"/><rect x="26.5" y="1.2" width="5.5" height="5.5" fill="#3fb7f2"/><rect x="0" y="26.6" width="5.5" height="5.5" fill="#3fb7f2"/><path d="M7.5 3.9 H25 M3.2 8.5 V25 M7.5 29.3 H16 M29.2 8.5 V15.5" stroke="#ececec" stroke-width="2"/><path d="M17 33 L19.9 26.2 L27.85 18.5 L31.45 15 Q35.5 15.5 35.35 19 L31.75 22.5 L23.9 30.2Z" fill="#f6c94b" stroke="#1f2632" stroke-width="1.6" stroke-linejoin="round"/><path d="M27.85 18.5 L31.75 22.5 L35.35 19 Q35.5 15.5 31.45 15Z" fill="#f0474f"/><path d="M17 33 L19.9 26.2 L23.9 30.2Z" fill="#f2f2f2"/></g>
<rect x="2466.2" y="1937" width="4" height="12" fill="#5a6574"/>
<g transform="translate(2451.7 1899)"><rect x="0" y="1.2" width="5.5" height="5.5" fill="#3fb7f2"/><rect x="26.5" y="1.2" width="5.5" height="5.5" fill="#3fb7f2"/><rect x="0" y="26.6" width="5.5" height="5.5" fill="#3fb7f2"/><path d="M7.5 3.9 H25 M3.2 8.5 V25 M7.5 29.3 H16 M29.2 8.5 V15.5" stroke="#ececec" stroke-width="2"/><path d="M17 33 L19.9 26.2 L27.85 18.5 L31.45 15 Q35.5 15.5 35.35 19 L31.75 22.5 L23.9 30.2Z" fill="#f6c94b" stroke="#1f2632" stroke-width="1.6" stroke-linejoin="round"/><path d="M27.85 18.5 L31.75 22.5 L35.35 19 Q35.5 15.5 31.45 15Z" fill="#f0474f"/><path d="M17 33 L19.9 26.2 L23.9 30.2Z" fill="#f2f2f2"/></g>
<rect x="2514.2" y="1937" width="4" height="12" fill="#5a6574"/>
<g transform="translate(2499.7 1899)"><rect x="0" y="1.2" width="5.5" height="5.5" fill="#3fb7f2"/><rect x="26.5" y="1.2" width="5.5" height="5.5" fill="#3fb7f2"/><rect x="0" y="26.6" width="5.5" height="5.5" fill="#3fb7f2"/><path d="M7.5 3.9 H25 M3.2 8.5 V25 M7.5 29.3 H16 M29.2 8.5 V15.5" stroke="#ececec" stroke-width="2"/><path d="M17 33 L19.9 26.2 L27.85 18.5 L31.45 15 Q35.5 15.5 35.35 19 L31.75 22.5 L23.9 30.2Z" fill="#f6c94b" stroke="#1f2632" stroke-width="1.6" stroke-linejoin="round"/><path d="M27.85 18.5 L31.75 22.5 L35.35 19 Q35.5 15.5 31.45 15Z" fill="#f0474f"/><path d="M17 33 L19.9 26.2 L23.9 30.2Z" fill="#f2f2f2"/></g>
<rect x="2562.1" y="1937" width="4" height="12" fill="#5a6574"/>
<g transform="translate(2546.1 1899)"><path d="M0 6.2 L5.5 0.7 H24.1 L18.3 6.2Z" fill="#a8ddfb"/><rect x="0" y="6.2" width="18.3" height="21" fill="#74c8f7"/><path d="M18.3 6.2 L24.1 0.7 V22.2 L18.3 27.2Z" fill="#4daee8"/><path d="M0 28 H18.3 L24.1 22.8 V27.5 L18.3 33.1 H0Z" fill="#e6e6e6"/><path d="M18.3 28 L24.1 22.8 V27.5 L18.3 33.1Z" fill="#bdbdbd"/><path d="M29.2 7 V27.2" stroke="#fff" stroke-width="2.2"/><path d="M26.2 7.5 L29.2 2.4 L32.2 7.5Z" fill="#fff"/></g>
<rect x="2610.1" y="1937" width="4" height="12" fill="#5a6574"/>
<g transform="translate(2599.1 1899)"><path d="M0 1 L7.5 8.5 M7.5 1 L0 8.5" stroke="#ff3b3b" stroke-width="2.8"/><path d="M11 16.5 L14.5 12.5 H28 L24.5 16.5Z" fill="#fafafa"/><rect x="11" y="16.5" width="13.5" height="14.5" fill="#b8e4f8" stroke="#1e6fd0" stroke-width="1.2"/><path d="M24.5 16.5 L28 12.5 V27 L24.5 31Z" fill="#e8e8e8"/></g>
<rect x="2658.0" y="1937" width="4" height="12" fill="#5a6574"/>
<g transform="translate(2643.5 1899)"><rect x="0" y="1.2" width="5.5" height="5.5" fill="#3fb7f2"/><rect x="26.5" y="1.2" width="5.5" height="5.5" fill="#3fb7f2"/><rect x="0" y="26.6" width="5.5" height="5.5" fill="#3fb7f2"/><path d="M7.5 3.9 H25 M3.2 8.5 V25 M7.5 29.3 H16 M29.2 8.5 V15.5" stroke="#ececec" stroke-width="2"/><path d="M17 33 L19.9 26.2 L27.85 18.5 L31.45 15 Q35.5 15.5 35.35 19 L31.75 22.5 L23.9 30.2Z" fill="#f6c94b" stroke="#1f2632" stroke-width="1.6" stroke-linejoin="round"/><path d="M27.85 18.5 L31.75 22.5 L35.35 19 Q35.5 15.5 31.45 15Z" fill="#f0474f"/><path d="M17 33 L19.9 26.2 L23.9 30.2Z" fill="#f2f2f2"/></g>
<rect x="2706.0" y="1937" width="4" height="12" fill="#5a6574"/>
<g transform="translate(2691.5 1899)"><rect x="0" y="1.2" width="5.5" height="5.5" fill="#3fb7f2"/><rect x="26.5" y="1.2" width="5.5" height="5.5" fill="#3fb7f2"/><rect x="0" y="26.6" width="5.5" height="5.5" fill="#3fb7f2"/><path d="M7.5 3.9 H25 M3.2 8.5 V25 M7.5 29.3 H16 M29.2 8.5 V15.5" stroke="#ececec" stroke-width="2"/><path d="M17 33 L19.9 26.2 L27.85 18.5 L31.45 15 Q35.5 15.5 35.35 19 L31.75 22.5 L23.9 30.2Z" fill="#f6c94b" stroke="#1f2632" stroke-width="1.6" stroke-linejoin="round"/><path d="M27.85 18.5 L31.75 22.5 L35.35 19 Q35.5 15.5 31.45 15Z" fill="#f0474f"/><path d="M17 33 L19.9 26.2 L23.9 30.2Z" fill="#f2f2f2"/></g>
<rect x="2754.0" y="1937" width="4" height="12" fill="#5a6574"/>
<g transform="translate(2738.0 1899)"><path d="M0 6.2 L5.5 0.7 H24.1 L18.3 6.2Z" fill="#a8ddfb"/><rect x="0" y="6.2" width="18.3" height="21" fill="#74c8f7"/><path d="M18.3 6.2 L24.1 0.7 V22.2 L18.3 27.2Z" fill="#4daee8"/><path d="M0 28 H18.3 L24.1 22.8 V27.5 L18.3 33.1 H0Z" fill="#e6e6e6"/><path d="M18.3 28 L24.1 22.8 V27.5 L18.3 33.1Z" fill="#bdbdbd"/><path d="M29.2 7 V27.2" stroke="#fff" stroke-width="2.2"/><path d="M26.2 7.5 L29.2 2.4 L32.2 7.5Z" fill="#fff"/></g>
<rect x="2801.9" y="1937" width="4" height="12" fill="#5a6574"/>
<g transform="translate(2788.4 1899)"><rect x="0" y="0.7" width="30.5" height="30.5" fill="#74c8f7" stroke="#1f2632" stroke-width="1"/><rect x="0" y="13.3" width="17.7" height="17.9" fill="#dddddd" stroke="#1f2632" stroke-width="1"/></g>
<rect x="2849.9" y="1937" width="4" height="12" fill="#5a6574"/>
<g transform="translate(2836.4 1899)"><rect x="0" y="0.7" width="30.5" height="30.5" fill="#74c8f7" stroke="#1f2632" stroke-width="1"/><rect x="0" y="13.3" width="17.7" height="17.9" fill="#dddddd" stroke="#1f2632" stroke-width="1"/></g>
<rect x="2897.8" y="1937" width="4" height="12" fill="#5a6574"/>
<g transform="translate(2883.3 1899)"><rect x="0" y="1.2" width="5.5" height="5.5" fill="#3fb7f2"/><rect x="26.5" y="1.2" width="5.5" height="5.5" fill="#3fb7f2"/><rect x="0" y="26.6" width="5.5" height="5.5" fill="#3fb7f2"/><path d="M7.5 3.9 H25 M3.2 8.5 V25 M7.5 29.3 H16 M29.2 8.5 V15.5" stroke="#ececec" stroke-width="2"/><path d="M17 33 L19.9 26.2 L27.85 18.5 L31.45 15 Q35.5 15.5 35.35 19 L31.75 22.5 L23.9 30.2Z" fill="#f6c94b" stroke="#1f2632" stroke-width="1.6" stroke-linejoin="round"/><path d="M27.85 18.5 L31.75 22.5 L35.35 19 Q35.5 15.5 31.45 15Z" fill="#f0474f"/><path d="M17 33 L19.9 26.2 L23.9 30.2Z" fill="#f2f2f2"/></g>
<path d="M2913.7 1888 H2934.3 V1896 L2926 1904 V1952 H2922 V1904 L2913.7 1896Z" fill="#c5c9cf"/>
<g fill="#8e95a0"><rect x="2979" y="1908.6" width="8" height="8" transform="rotate(0 2983 1925.6)"/><rect x="2979" y="1908.6" width="8" height="8" transform="rotate(45 2983 1925.6)"/><rect x="2979" y="1908.6" width="8" height="8" transform="rotate(90 2983 1925.6)"/><rect x="2979" y="1908.6" width="8" height="8" transform="rotate(135 2983 1925.6)"/><rect x="2979" y="1908.6" width="8" height="8" transform="rotate(180 2983 1925.6)"/><rect x="2979" y="1908.6" width="8" height="8" transform="rotate(225 2983 1925.6)"/><rect x="2979" y="1908.6" width="8" height="8" transform="rotate(270 2983 1925.6)"/><rect x="2979" y="1908.6" width="8" height="8" transform="rotate(315 2983 1925.6)"/><circle cx="2983" cy="1925.6" r="12"/></g><circle cx="2983" cy="1925.6" r="5.2" fill="#384453"/>
</svg>
</body></html>
